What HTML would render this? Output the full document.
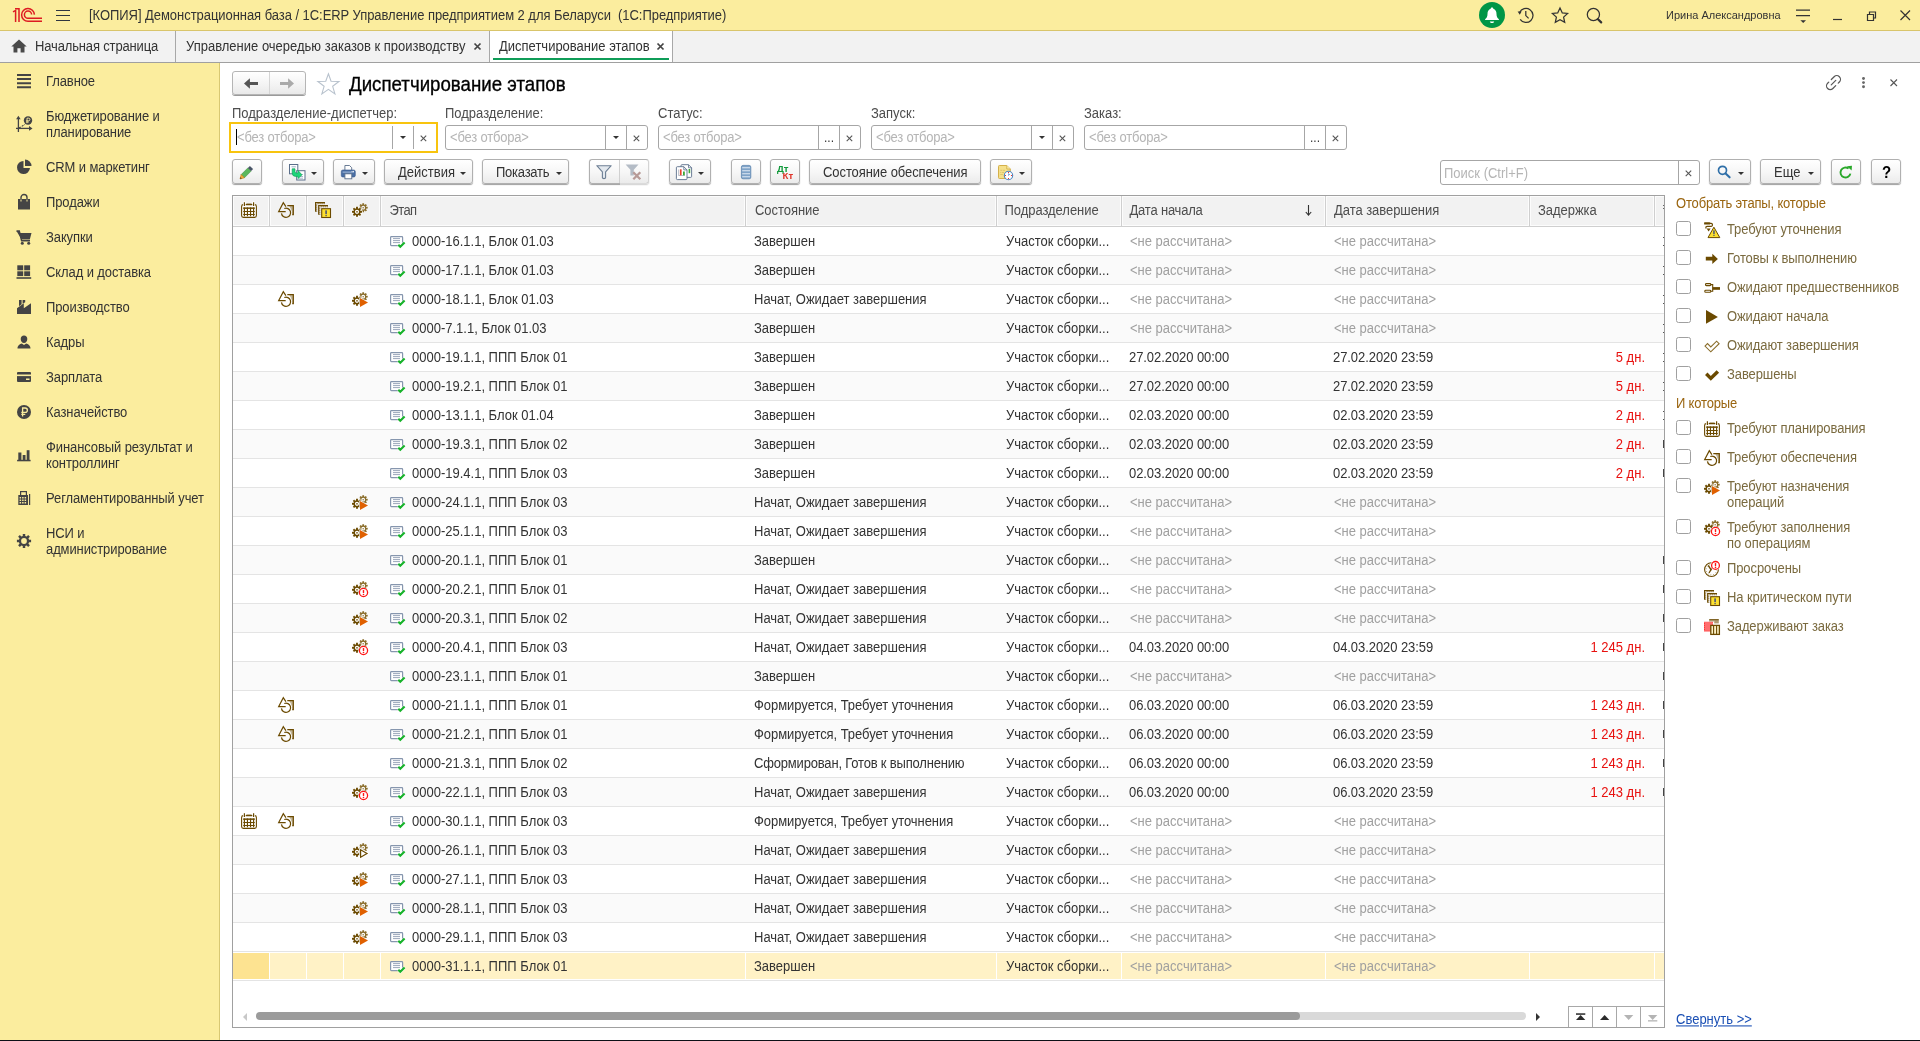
<!DOCTYPE html>
<html lang="ru"><head><meta charset="utf-8"><title>Диспетчирование этапов</title>
<style>
*{box-sizing:border-box;margin:0;padding:0}
html,body{width:1920px;height:1041px;overflow:hidden;background:#fff}
body{font-family:"Liberation Sans", Arial, sans-serif;font-size:13px;color:#333;position:relative;will-change:transform}
.abs{position:absolute}
.t{position:absolute;white-space:nowrap;line-height:16px;margin-top:1px}
.t,.sb,.lbl,.rp,.rph,.ph{transform:scaleY(1.075);transform-origin:0 8px}
#titlebar{position:absolute;left:0;top:0;width:1920px;height:31px;background:#fbed9e;border-bottom:1px solid #d9c56b}
#tabbar{position:absolute;left:0;top:31px;width:1920px;height:32px;background:#f2f2f2;border-bottom:1px solid #a0a0a0}
#sidebar{position:absolute;left:0;top:63px;width:220px;height:977px;background:#fbed9e;border-right:1px solid #d8c873}
#bottom{position:absolute;left:0;top:1040px;width:1920px;height:1px;background:#0d1016}
.tab{position:absolute;top:0;height:31px;border-right:1px solid #a8a8a8}
.sb{position:absolute;margin-top:1px;letter-spacing:-0.1px;left:46px;color:#333;font-size:13px;line-height:16px;white-space:nowrap}
.btn{position:absolute;height:25px;top:159px;border:1px solid #b0b0b0;border-radius:3px;background:linear-gradient(#ffffff,#f6f6f6 55%,#ebebeb);box-shadow:0 1px 1px rgba(0,0,0,.38)}
.btn .t{color:#333}
.inp{position:absolute;top:125px;height:25px;border:1px solid #a6a6a6;border-radius:3px;background:#fff}
.inp .ph{position:absolute;left:4px;top:4px;letter-spacing:-0.2px;color:#b5b5b5;font-size:13px;line-height:16px;white-space:nowrap}
.inp .sep{position:absolute;top:0;width:1px;height:23px;background:#a6a6a6}
.lbl{position:absolute;top:106px;color:#4d4d4d;font-size:13px;line-height:16px;white-space:nowrap}
.caret{position:absolute;width:0;height:0;border-left:3px solid transparent;border-right:3px solid transparent;border-top:3px solid #333}
#grid{position:absolute;left:232px;top:195px;width:1433px;height:833px;border:1px solid #a0a0a0;background:#fff;overflow:hidden}
.hd{position:absolute;top:0;height:31px;background:#f2f2f2;border-right:1px solid #cfcfcf;border-bottom:1px solid #cfcfcf;box-shadow:inset 1px 1px 0 #fcfcfc,inset -1px -1px 0 #fcfcfc}
.hd .t{top:6px;color:#4d4d4d}
.row{position:absolute;left:0;width:1431px;height:29px;border-bottom:1px solid #e4e4e4}
.row.alt{background:#fafafa}
.row.sel{background:#fff}
.row .t{top:6px;color:#333}
.row .g{color:#a0a0a0}
.row .r{color:#e8110f}
.cb{position:absolute;left:1676px;width:15px;height:15px;border:1px solid #a0a0a0;border-radius:2.5px;background:#fff}
.rp{position:absolute;margin-top:1px;letter-spacing:-0.1px;left:1727px;color:#7a6a3f;font-size:13px;line-height:16px;white-space:nowrap}
.rph{position:absolute;margin-top:1px;letter-spacing:-0.17px;left:1676px;color:#9a6510;font-size:13px;line-height:16px;white-space:nowrap}
svg{position:absolute;overflow:visible}
</style></head>
<body>
<div id="titlebar">
<svg style="left:12px;top:7px" width="31" height="17" viewBox="0 0 31 17"><g fill="none" stroke="#dd1b22" stroke-width="1.5"><path d="M1 4.8 L3.6 3.4 V15"/><path d="M3 1.8 H7 V15"/><path d="M22.4 7.6 A6.4 6.4 0 1 0 16 14.3 H30"/><path d="M19.6 7.6 A3.6 3.6 0 1 0 16 11.3 H30"/></g></svg>
<svg style="left:56px;top:9px" width="15" height="13" viewBox="0 0 15 13"><g stroke="#2f3640" stroke-width="1.2"><path d="M0 1.5H14M0 6.5H14M0 11.5H14"/></g></svg>
<div class="t" style="left:89px;top:7px;font-size:13px;letter-spacing:-0.05px;color:#333">[КОПИЯ] Демонстрационная база / 1С:ERP Управление предприятием 2 для Беларуси&nbsp; (1С:Предприятие)</div>
<svg style="left:1479px;top:2px" width="26" height="26" viewBox="0 0 26 26"><circle cx="13" cy="13" r="13" fill="#009646"/><path d="M13 5.6c-.8 0-1.3.5-1.3 1.2-2.2.7-3.2 2.6-3.2 5.1 0 2.6-.9 4.2-2.4 5.3v.9h13.8v-.9c-1.5-1.1-2.4-2.7-2.4-5.3 0-2.5-1-4.4-3.2-5.1 0-.7-.5-1.2-1.3-1.2z" fill="#fff"/><path d="M10.8 19.4h4.4c-.3 1-1.1 1.5-2.2 1.5s-1.900-.5-2.200-1.500z" fill="#fff"/></svg>
<svg style="left:1515px;top:5px" width="20" height="20" viewBox="0 0 20 20"><g fill="none" stroke="#333" stroke-width="1.25"><path d="M4.6 7.6 A7 7 0 1 1 5.2 14.4"/><path d="M10.8 6V10.6L13.6 13.4"/></g><path d="M2.6 6.4 L6.6 6.6 L4.8 9.8z" fill="#333"/></svg>
<svg style="left:1550px;top:5px" width="20" height="20" viewBox="0 0 20 20"><path d="M10 2.9l2.3 5 5.3.6-4 3.600 1.100 5.300L10 14.800l-4.700 2.600 1.100-5.300-4-3.600 5.300-.6z" fill="none" stroke="#333" stroke-width="1.25" stroke-linejoin="miter"/></svg>
<svg style="left:1585px;top:5px" width="20" height="20" viewBox="0 0 20 20"><circle cx="8.4" cy="9.5" r="6.1" fill="none" stroke="#333" stroke-width="1.25"/><path d="M13 14.200L16.200 17.400" stroke="#333" stroke-width="2.2" stroke-linecap="round"/></svg>
<div class="t" style="left:1666px;top:6px;font-size:11px;color:#333">Ирина Александровна</div>
<svg style="left:1795px;top:8px" width="16" height="16" viewBox="0 0 16 16"><path d="M1 2.2H15M1 7.6H15" stroke="#333" stroke-width="1.2"/><path d="M5.4 12.2h5.6l-2.800 2.900z" fill="#333"/></svg>
<svg style="left:1832px;top:8px" width="12" height="14" viewBox="0 0 12 14"><path d="M1 11.5H10" stroke="#333" stroke-width="1.2"/></svg>
<svg style="left:1866px;top:10px" width="12" height="12" viewBox="0 0 12 12"><g fill="none" stroke="#333" stroke-width="1.2"><path d="M1.5 4.5h6v6h-6z"/><path d="M3.5 4.5v-2.5h6v6h-2"/></g></svg>
<svg style="left:1900px;top:9.5px" width="11" height="11" viewBox="0 0 11 11"><path d="M0.5 0.5L10 10M10 0.5L0.5 10" stroke="#333" stroke-width="1.2"/></svg>
</div>
<div id="tabbar">
<div class="tab" style="left:0;width:176px"><svg style="left:11px;top:8px" width="16" height="14" viewBox="0 0 16 14"><path d="M8 0.5L0.3 7.5H2.5V13.5H6.4V9.3H9.6V13.5H13.5V7.5H15.7z" fill="#4a4a4a"/></svg><div class="t" style="left:35px;top:7px;letter-spacing:-0.15px">Начальная страница</div></div>
<div class="tab" style="left:176px;width:314px"><div class="t" style="left:10px;top:7px">Управление очередью заказов к производству</div><svg style="left:298px;top:12px" width="7" height="7" viewBox="0 0 7 7"><path d="M0.5 0.5L6.5 6.5M6.5 0.5L0.5 6.5" stroke="#444" stroke-width="1.7"/></svg></div>
<div class="tab" style="left:490px;width:183px;background:#fff"><div class="t" style="left:9px;top:7px">Диспетчирование этапов</div><svg style="left:167px;top:12px" width="7" height="7" viewBox="0 0 7 7"><path d="M0.5 0.5L6.5 6.5M6.5 0.5L0.5 6.5" stroke="#444" stroke-width="1.7"/></svg><div class="abs" style="left:3px;top:27px;width:176px;height:2px;background:#0f9d58"></div></div>
</div>
<div id="sidebar">
<div class="sb" style="top:10px">Главное</div>
<svg style="left:16px;top:10px" width="16" height="16" viewBox="0 0 16 16"><path d="M1 2H15M1 6.1H15M1 10.2H15M1 14.3H15" stroke="#444" stroke-width="2"/></svg>
<div class="sb" style="top:45px">Бюджетирование и</div>
<div class="sb" style="top:61px">планирование</div>
<svg style="left:16px;top:53px" width="16" height="16" viewBox="0 0 16 16"><g stroke="#444" stroke-width="1.3" fill="none"><path d="M2.4 2V16"/><path d="M0 12.4H14.5"/><path d="M3 12L9 8.4" stroke-dasharray="2 1.2" stroke-width="1.1"/></g><path d="M2.4 -0.3L4.700 3.300H0.100z" fill="#444"/><path d="M16.5 12.4L13 10.100V14.700z" fill="#444"/><circle cx="12" cy="4.5" r="4.2" fill="#444"/><path d="M11 7.200V2.200H12.600A1.200 1.200 0 0 1 12.600 4.800H10.200M10.200 6H12.800" stroke="#fbed9e" stroke-width="0.9" fill="none"/></svg>
<div class="sb" style="top:96px">CRM и маркетинг</div>
<svg style="left:16px;top:96px" width="16" height="16" viewBox="0 0 16 16"><path d="M7.5 2A6.5 6.5 0 1 0 14 9H7.5z" fill="#444"/><path d="M9 0.5A6.5 6.5 0 0 1 15.5 7H9z" fill="#444"/></svg>
<div class="sb" style="top:131px">Продажи</div>
<svg style="left:16px;top:131px" width="16" height="16" viewBox="0 0 16 16"><path d="M2 5H14V15.5H2z" fill="#444"/><path d="M5 7V3.5A3 3 0 0 1 11 3.5V7" fill="none" stroke="#444" stroke-width="1.4"/><path d="M5 5.5v2M11 5.5v2" stroke="#fbed9e" stroke-width="1"/></svg>
<div class="sb" style="top:166px">Закупки</div>
<svg style="left:16px;top:166px" width="16" height="16" viewBox="0 0 16 16"><path d="M0.5 2H3.5L4.2 4H15.5L13.8 10.5H5.5z" fill="#444"/><path d="M0.5 2H3.3L5.6 11.8H14" fill="none" stroke="#444" stroke-width="1.4"/><circle cx="6.3" cy="14.2" r="1.5" fill="#444"/><circle cx="12.7" cy="14.2" r="1.5" fill="#444"/></svg>
<div class="sb" style="top:201px">Склад и доставка</div>
<svg style="left:16px;top:201px" width="16" height="16" viewBox="0 0 16 16"><g fill="#444" transform="translate(0 -1)"><rect x="1.3" y="2.3" width="5.9" height="5"/><rect x="8.2" y="2.3" width="5.9" height="5"/><rect x="1.3" y="8.3" width="5.9" height="4.8"/><rect x="8.2" y="8.3" width="5.9" height="4.8"/><rect x="0.5" y="14.2" width="14.7" height="1.6"/></g></svg>
<div class="sb" style="top:236px">Производство</div>
<svg style="left:16px;top:236px" width="16" height="16" viewBox="0 0 16 16"><path d="M1 15V9.3L7.8 4.3V9.3L15 4.3V15z" fill="#444"/><path d="M3 1H5.6V5.2L3 7.2z" fill="#444"/><path d="M6.6 1H9.2V3.2L6.6 4.7z" fill="#444"/></svg>
<div class="sb" style="top:271px">Кадры</div>
<svg style="left:16px;top:271px" width="16" height="16" viewBox="0 0 16 16"><path d="M8 1.5C10 1.5 11.3 3 11.3 5S10 9 8 9 4.7 7 4.7 5 6 1.5 8 1.5z" fill="#444"/><path d="M1.5 14.5C1.5 11.5 4 10 5.8 9.6L8 11 10.2 9.6C12 10 14.5 11.5 14.5 14.5z" fill="#444"/></svg>
<div class="sb" style="top:306px">Зарплата</div>
<svg style="left:16px;top:306px" width="16" height="16" viewBox="0 0 16 16"><rect x="1" y="3" width="14" height="10" rx="1" fill="#444"/><rect x="1" y="5.5" width="14" height="1.6" fill="#fbed9e"/><rect x="10" y="9.5" width="3.5" height="1.5" fill="#fbed9e"/></svg>
<div class="sb" style="top:341px">Казначейство</div>
<svg style="left:16px;top:341px" width="16" height="16" viewBox="0 0 16 16"><circle cx="8" cy="8" r="7" fill="#444"/><path d="M6.6 12.5V4H9.2A2.1 2.1 0 0 1 9.2 8.3H5.3M5.3 10.3H9.3" stroke="#fbed9e" stroke-width="1.3" fill="none"/></svg>
<div class="sb" style="top:376px">Финансовый результат и</div>
<div class="sb" style="top:392px">контроллинг</div>
<svg style="left:16px;top:384px" width="16" height="16" viewBox="0 0 16 16"><g fill="#444"><rect x="1.1" y="12.8" width="13.5" height="1.5"/><rect x="2.3" y="5.5" width="3.1" height="8"/><rect x="6.7" y="8" width="2.8" height="5.500"/><rect x="10.7" y="3.2" width="2.8" height="10.300"/></g></svg>
<div class="sb" style="top:427px">Регламентированный учет</div>
<svg style="left:16px;top:427px" width="16" height="16" viewBox="0 0 16 16"><path d="M4 1H11V5H12V15H2.3V5H4z" fill="#444"/><rect x="5.2" y="2.2" width="4.6" height="2.8" fill="#fbed9e"/><g fill="#fbed9e"><rect x="3.6" y="7" width="1.5" height="1.5"/><rect x="6.1" y="7" width="1.5" height="1.5"/><rect x="8.6" y="7" width="1.5" height="1.5"/><rect x="3.6" y="9.5" width="1.5" height="1.5"/><rect x="6.1" y="9.5" width="1.5" height="1.5"/><rect x="8.6" y="9.5" width="1.5" height="1.5"/><rect x="3.6" y="12" width="1.5" height="1.5"/><rect x="6.1" y="12" width="1.5" height="1.5"/><rect x="8.6" y="12" width="1.5" height="1.5"/></g><path d="M13.6 4V15" stroke="#444" stroke-width="1.2"/></svg>
<div class="sb" style="top:462px">НСИ и</div>
<div class="sb" style="top:478px">администрирование</div>
<svg style="left:16px;top:470px" width="16" height="16" viewBox="0 0 16 16"><path d="M15.09 6.76L15.09 9.24L13.06 9.21L12.43 10.72L13.89 12.14L12.14 13.89L10.72 12.43L9.21 13.06L9.24 15.09L6.76 15.09L6.79 13.06L5.28 12.43L3.86 13.89L2.11 12.14L3.57 10.72L2.94 9.21L0.91 9.24L0.91 6.76L2.94 6.79L3.57 5.28L2.11 3.86L3.86 2.11L5.28 3.57L6.79 2.94L6.76 0.91L9.24 0.91L9.21 2.94L10.72 3.57L12.14 2.11L13.89 3.86L12.43 5.28L13.06 6.79z" fill="#444"/><circle cx="8" cy="8" r="2.9" fill="#fbed9e"/></svg>
</div>
<div class="abs" style="left:232px;top:71px;width:74px;height:24px;border:1px solid #b5b5b5;border-radius:3px;background:linear-gradient(#fff,#f3f3f3 60%,#e9e9e9);box-shadow:0 1px 0 #9a9a9a"><div class="abs" style="left:36px;top:0;width:1px;height:22px;background:#d5d5d5"></div><svg style="left:11px;top:6px" width="14" height="11" viewBox="0 0 14 11"><path d="M0 5.5L5.9 0.200V4.100H14V6.900H5.900V10.800z" fill="#555"/></svg><svg style="left:47px;top:6px" width="14" height="11" viewBox="0 0 14 11"><path d="M14 5.5L8.100 0.200V4.100H0V6.900H8.100V10.800z" fill="#aaa"/></svg></div>
<svg style="left:316.4px;top:72px" width="25" height="25" viewBox="0 0 25 25"><path d="M12.40 1.80L15.05 9.26L22.96 9.47L16.68 14.29L18.92 21.88L12.40 17.40L5.88 21.88L8.12 14.29L1.84 9.47L9.75 9.26z" fill="#fff" stroke="#b8c2cd" stroke-width="1.1" stroke-linejoin="miter"/></svg>
<div class="t" style="left:349px;top:71px;font-size:18.7px;line-height:24px;color:#000;-webkit-text-stroke:0.3px #000">Диспетчирование этапов</div>
<svg style="left:1824px;top:73px" width="19" height="19" viewBox="0 0 19 19"><g transform="translate(9.5 9.6) rotate(-45)" fill="none" stroke="#595959" stroke-width="1.25" stroke-linecap="round"><path d="M0.6 -3.7H4.6A3.7 3.7 0 0 1 4.6 3.7H3"/><path d="M-0.6 3.7H-4.6A3.7 3.7 0 0 1 -4.6 -3.7H-3"/><path d="M-3.2 0H3.2"/></g></svg>
<svg style="left:1860px;top:75px" width="7" height="16" viewBox="0 0 7 16"><g fill="#666"><circle cx="3.5" cy="3.5" r="1.45"/><circle cx="3.5" cy="7.6" r="1.45"/><circle cx="3.5" cy="11.7" r="1.45"/></g></svg>
<svg style="left:1890px;top:79px" width="8" height="8" viewBox="0 0 8 8"><path d="M0.5 0.5L7 7M7 0.5L0.5 7" stroke="#555" stroke-width="1.1"/></svg>
<div class="lbl" style="left:232px">Подразделение-диспетчер:</div>
<div class="lbl" style="left:445px">Подразделение:</div>
<div class="lbl" style="left:658px">Статус:</div>
<div class="lbl" style="left:871px">Запуск:</div>
<div class="lbl" style="left:1084px">Заказ:</div>
<div class="abs" style="left:229px;top:122px;width:209px;height:31px;border:2px solid #f8c40e;background:#fff"></div>
<div class="inp" style="left:232px;width:203px;border-color:transparent;background:transparent"><div class="ph">&lt;без отбора&gt;</div><div class="sep" style="left:159px"></div><div class="sep" style="left:180px"></div><div class="caret" style="left:167px;top:10px"></div><svg style="left:187.4px;top:8.6px" width="7" height="7" viewBox="0 0 7 7"><path d="M0.7 0.7L6.2 6.2M6.2 0.7L0.7 6.2" stroke="#555" stroke-width="1.1"/></svg></div>
<div class="abs" style="left:236px;top:129px;width:1px;height:16px;background:#000"></div>
<div class="inp" style="left:445px;width:203px"><div class="ph">&lt;без отбора&gt;</div><div class="sep" style="left:159px"></div><div class="sep" style="left:180px"></div><div class="caret" style="left:167px;top:10px"></div><svg style="left:187.4px;top:8.6px" width="7" height="7" viewBox="0 0 7 7"><path d="M0.7 0.7L6.2 6.2M6.2 0.7L0.7 6.2" stroke="#555" stroke-width="1.1"/></svg></div>
<div class="inp" style="left:658px;width:203px"><div class="ph">&lt;без отбора&gt;</div><div class="sep" style="left:159px"></div><div class="sep" style="left:180px"></div><div class="t" style="left:165px;top:3px;font-size:12px;color:#333">...</div><svg style="left:187.4px;top:8.6px" width="7" height="7" viewBox="0 0 7 7"><path d="M0.7 0.7L6.2 6.2M6.2 0.7L0.7 6.2" stroke="#555" stroke-width="1.1"/></svg></div>
<div class="inp" style="left:871px;width:203px"><div class="ph">&lt;без отбора&gt;</div><div class="sep" style="left:159px"></div><div class="sep" style="left:180px"></div><div class="caret" style="left:167px;top:10px"></div><svg style="left:187.4px;top:8.6px" width="7" height="7" viewBox="0 0 7 7"><path d="M0.7 0.7L6.2 6.2M6.2 0.7L0.7 6.2" stroke="#555" stroke-width="1.1"/></svg></div>
<div class="inp" style="left:1084px;width:263px"><div class="ph">&lt;без отбора&gt;</div><div class="sep" style="left:219px"></div><div class="sep" style="left:240px"></div><div class="t" style="left:225px;top:3px;font-size:12px;color:#333">...</div><svg style="left:247.4px;top:8.6px" width="7" height="7" viewBox="0 0 7 7"><path d="M0.7 0.7L6.2 6.2M6.2 0.7L0.7 6.2" stroke="#555" stroke-width="1.1"/></svg></div>
<div class="btn" style="left:232px;width:30px"><svg style="left:5px;top:4px" width="17" height="17" viewBox="0 0 17 17"><path d="M3.2 10.6L9.9 3.9 13.1 7.1 6.4 13.8z" fill="#5cb85c" stroke="#3f8f3f" stroke-width="0.6"/><path d="M9.9 3.9L11.9 1.9 15.1 5.1 13.1 7.1z" fill="#4a5568"/><path d="M2 15L3.2 10.6 6.4 13.8z" fill="#f5b041" stroke="#b9770e" stroke-width="0.6"/><path d="M2 15l.5-1.9 1.4 1.4z" fill="#6e4a1a"/></svg></div>
<div class="btn" style="left:282px;width:42px"><svg style="left:6px;top:4px" width="17" height="17" viewBox="0 0 17 17"><rect x="0.5" y="0.5" width="8.3" height="9.3" fill="#fff" stroke="#5a6e8a" stroke-width="1"/><path d="M2.5 2.8h4.4" stroke="#9fb0c6" stroke-width="1"/><rect x="7.7" y="6.7" width="8.3" height="9.3" fill="#fff" stroke="#5a6e8a" stroke-width="1"/><path d="M10 10.5h4M10 12.5h4M10 14.2h4" stroke="#9fb0c6" stroke-width="0.9"/><path d="M3.2 4.8H6V7.6Q6 9 7.4 9H9V6.6L13 10.8 9 14.6V12.4H6.6Q3.2 12.4 3.2 9z" fill="#1fd47a" stroke="#12a85c" stroke-width="0.7" stroke-linejoin="round"/></svg><div class="caret" style="left:28px;top:12px"></div></div>
<div class="btn" style="left:333px;width:42px"><svg style="left:7px;top:4px" width="15" height="16" viewBox="0 0 15 16"><path d="M3.9 1.5H8.5L10.7 3.7V7H3.9z" fill="#fff" stroke="#5a6e8a" stroke-width="0.9"/><rect x="0.3" y="6" width="14" height="7" rx="1.6" fill="#4a6fa5" stroke="#34568a" stroke-width="0.6"/><rect x="1.6" y="7.6" width="11.4" height="1" fill="#a9bfdc"/><rect x="3.9" y="9.8" width="6.9" height="5" fill="#fff" stroke="#5a6e8a" stroke-width="0.9"/><rect x="10.6" y="6.9" width="1" height="0.9" fill="#fff"/><rect x="12" y="6.9" width="1" height="0.9" fill="#fff"/></svg><div class="caret" style="left:28px;top:12px"></div></div>
<div class="btn" style="left:384px;width:89px"><div class="t" style="left:13px;top:4px">Действия</div><div class="caret" style="left:75px;top:12px"></div></div>
<div class="btn" style="left:482px;width:87px"><div class="t" style="left:13px;top:4px;letter-spacing:-0.25px">Показать</div><div class="caret" style="left:73px;top:12px"></div></div>
<div class="btn" style="left:589px;width:60px;border-color:#b0b0b0 #d4d4d4 #b0b0b0 #b0b0b0"><div class="abs" style="left:29px;top:0;width:1px;height:23px;background:#d0d0d0"></div><div class="abs" style="left:30px;top:23px;width:29px;height:2px;background:#fff;opacity:.55"></div><svg style="left:6px;top:5px" width="16" height="15" viewBox="0 0 16 15"><path d="M0.8 0.7H15.2L9.6 6.9V12.6Q9.6 13.6 8 13.6 6.4 13.6 6.4 12.6V6.9z" fill="#e3e8ee" stroke="#6d7f94" stroke-width="1.1" stroke-linejoin="round"/></svg><svg style="left:35px;top:4px" width="17" height="17" viewBox="0 0 17 17"><path d="M0.6 0.4H13.5L8.8 5.8V11.4H5.4V5.8z" fill="#b4bcc6"/><path d="M8.3 8.2L15.3 15.2M15.3 8.2L8.3 15.2" stroke="#b79a97" stroke-width="2.3"/></svg></div>
<div class="btn" style="left:669px;width:42px"><svg style="left:6px;top:4px" width="17" height="17" viewBox="0 0 17 17"><path d="M6 0.7H12.5L15.6 3.8V12.4Q15.6 13.4 14.6 13.4H6Q5 13.4 5 12.4V1.7Q5 0.7 6 0.7z" fill="#fff" stroke="#5a6e8a" stroke-width="0.9"/><path d="M12.5 0.7V3.8H15.6" fill="none" stroke="#5a6e8a" stroke-width="0.8"/><rect x="12.6" y="5" width="1.6" height="4.2" fill="#3aa935"/><path d="M1.4 2.7H7.8L11 5.9V14.6Q11 15.6 10 15.6H1.4Q0.4 15.6 0.4 14.6V3.7Q0.4 2.7 1.4 2.7z" fill="#fff" stroke="#5a6e8a" stroke-width="0.9"/><path d="M7.8 2.7V5.9H11" fill="none" stroke="#5a6e8a" stroke-width="0.8"/><path d="M2.6 5.5V11.5H9" fill="none" stroke="#8a97a8" stroke-width="0.6"/><rect x="3.9" y="5.3" width="1.7" height="6" fill="#e8412c"/><rect x="7" y="7.5" width="1.8" height="3.8" fill="#3aa935"/></svg><div class="caret" style="left:28px;top:12px"></div></div>
<div class="btn" style="left:731px;width:30px"><svg style="left:9px;top:5px" width="10" height="14" viewBox="0 0 10 14"><rect x="0.4" y="0.4" width="9.4" height="13.4" rx="1.6" fill="#7fa3c8" stroke="#5f86b0" stroke-width="0.8"/><path d="M1.2 2.8h7.8M1.2 5.8h7.8M1.2 8.8h7.8M1.2 11.8h7.8" stroke="#dfe9f4" stroke-width="1.1"/></svg></div>
<div class="btn" style="left:770px;width:30px"><svg style="left:6px;top:4px" width="21" height="17" viewBox="0 0 21 17"><text x="0" y="8" font-family="Liberation Sans,Arial,sans-serif" font-size="9.6" font-weight="bold" fill="#119a3b">Дт</text><text x="5.6" y="15.2" font-family="Liberation Sans,Arial,sans-serif" font-size="9.6" font-weight="bold" fill="#e0352b">Кт</text></svg></div>
<div class="btn" style="left:809px;width:172px"><div class="t" style="left:13px;top:4px;letter-spacing:-0.08px">Состояние обеспечения</div></div>
<div class="btn" style="left:990px;width:42px"><svg style="left:7px;top:5px" width="16" height="16" viewBox="0 0 16 16"><path d="M1.4 0.5H8.8L12.3 4V12.6Q12.3 13.5 11.4 13.5H1.4Q0.5 13.5 0.5 12.6V1.4Q0.5 0.5 1.4 0.5z" fill="#f5e08a" stroke="#d4b04a" stroke-width="1"/><path d="M8.8 0.5V4H12.3" fill="#faeeb0" stroke="#d4b04a" stroke-width="0.9"/><path d="M2.3 5.3h2M5 5.3h2M2.3 7.5h1M4 7.5h2M2.3 9.5h2.6" stroke="#dcc268" stroke-width="0.9"/><circle cx="10.5" cy="10.5" r="4.2" fill="#fff" stroke="#4a85c0" stroke-width="1.1"/><path d="M10.5 10.5V8.3M10.5 10.5L12 9" stroke="#7fa6d8" stroke-width="0.9"/><g fill="#e8110f"><circle cx="10.5" cy="7.5" r="0.6"/><circle cx="10.5" cy="13.5" r="0.6"/><circle cx="7.5" cy="10.5" r="0.6"/><circle cx="13.5" cy="10.5" r="0.6"/></g></svg><div class="caret" style="left:28px;top:12px"></div></div>
<div class="abs" style="left:1440px;top:160px;width:260px;height:25px;border:1px solid #a6a6a6;border-radius:3px;background:#fff"><div class="t" style="left:3px;top:4px;color:#b5b5b5">Поиск (Ctrl+F)</div><div class="abs" style="left:237px;top:0;width:1px;height:23px;background:#a6a6a6"></div><svg style="left:244px;top:9px" width="7" height="7" viewBox="0 0 7 7"><path d="M0.7 0.7L6.2 6.2M6.2 0.7L0.7 6.2" stroke="#555" stroke-width="1.1"/></svg></div>
<div class="btn" style="left:1709px;width:42px"><svg style="left:7px;top:5px" width="15" height="14" viewBox="0 0 15 14"><circle cx="5.5" cy="5.3" r="4" fill="none" stroke="#2f6fa8" stroke-width="1.7"/><path d="M8.6 8.4L12.6 12.3" stroke="#2f6fa8" stroke-width="2.1" stroke-linecap="round"/></svg><div class="caret" style="left:28px;top:12px"></div></div>
<div class="btn" style="left:1760px;width:61px"><div class="t" style="left:13px;top:4px">Еще</div><div class="caret" style="left:47px;top:12px"></div></div>
<div class="btn" style="left:1831px;width:30px"><svg style="left:7px;top:5px" width="14" height="14" viewBox="0 0 14 14"><path d="M11.4 8.6A5 5 0 1 1 9.6 3.6" fill="none" stroke="#2aa82a" stroke-width="1.9"/><path d="M7.9 1.3L13 0.8 12.6 5.6z" fill="#2aa82a"/></svg></div>
<div class="btn" style="left:1871px;width:30px"><div class="t" style="left:10px;top:4px;font-weight:bold;color:#000;font-size:15px">?</div></div>
<div id="grid">
<div class="hd" style="left:0px;width:37px"><svg style="left:8px;top:6px" width="16" height="16" viewBox="0 0 16 16"><rect x="0.6" y="2.6" width="14.8" height="12.8" rx="1.8" fill="#fff" stroke="#6b4a00" stroke-width="1.1"/><path d="M3.4 -0.4V4.4M12.6 -0.4V4.4" stroke="#fff" stroke-width="2.6"/><path d="M5.4 2.3H10.6" stroke="#6b4a00" stroke-width="1.4"/><path d="M3.4 0.2V3.9M12.6 0.2V3.9" stroke="#6b4a00" stroke-width="1.2"/><rect x="2.2" y="5.4" width="11.6" height="1.5" fill="#6b4a00"/><path d="M3.4 5.4V14.2M6.45 5.4V14.2M9.55 5.4V14.2M12.6 5.4V14.2M2.2 9.5H13.8M2.2 12.5H13.8" stroke="#6b4a00" stroke-width="1.15"/></svg></div>
<div class="hd" style="left:37px;width:37px"><svg style="left:8px;top:6px" width="16" height="16" viewBox="0 0 16 16"><path d="M11.3 4L15 4 15 12 14 12 14 9.5 12.6 6.3z" fill="#6b4a00" opacity=".4"/><g fill="none" stroke="#6b4a00" stroke-width="1.25"><path d="M7.9 4.7L5.3 0.7 0.7 9.5H7.7"/><path d="M6.3 6.5A4.6 4.6 0 1 1 3.45 11.4"/><path d="M9.3 3.5H15.3V12.5H14.2"/></g></svg></div>
<div class="hd" style="left:74px;width:37px"><svg style="left:8px;top:6px" width="16" height="16" viewBox="0 0 16 16"><g fill="none" stroke="#6b4a00"><path d="M0.6 9.8V0.6H10" stroke-width="1.2"/><path d="M1.7 2.6V9.8" stroke-width="1" stroke-dasharray="1 1"/><path d="M2.6 1.7H10" stroke-width="1" stroke-dasharray="1 1"/><path d="M3.7 12.8V3.7H13" stroke-width="1.2"/><path d="M4.8 5.7V12.8" stroke-width="1" stroke-dasharray="1 1"/><path d="M5.7 4.8H13" stroke-width="1" stroke-dasharray="1 1"/></g><rect x="6.7" y="6.7" width="8.8" height="8.8" fill="#fde030" stroke="#6b4a00" stroke-width="1.1"/><rect x="10.3" y="8.3" width="1.6" height="3.9" rx=".4" fill="#4a5578"/><rect x="10.3" y="13.1" width="1.6" height="1.1" rx=".5" fill="#4a5578"/></svg></div>
<div class="hd" style="left:111px;width:37px"><svg style="left:8px;top:7px" width="16" height="16" viewBox="0 0 16 16"><path d="M15.71 3.80L15.71 5.60L14.40 5.50L14.03 6.40L15.02 7.26L13.76 8.52L12.90 7.53L12.00 7.90L12.10 9.21L10.30 9.21L10.40 7.90L9.50 7.53L8.64 8.52L7.38 7.26L8.37 6.40L8.00 5.50L6.69 5.60L6.69 3.80L8.00 3.90L8.37 3.00L7.38 2.14L8.64 0.88L9.50 1.87L10.40 1.50L10.30 0.19L12.10 0.19L12.00 1.50L12.90 1.87L13.76 0.88L15.02 2.14L14.03 3.00L14.40 3.90zM9.30 4.70a1.90 1.90 0 1 0 3.80 0a1.90 1.90 0 1 0 -3.80 0z" fill="#8a6d2a" fill-rule="evenodd"/><rect x="10.50" y="4.00" width="1.40" height="1.40" fill="#8a6d2a" opacity=".8"/><circle cx="5" cy="8.8" r="5.6" fill="#fff" opacity=".9"/><path d="M10.00 7.81L10.00 9.79L8.59 9.69L8.17 10.71L9.24 11.63L7.83 13.04L6.91 11.97L5.89 12.39L5.99 13.80L4.01 13.80L4.11 12.39L3.09 11.97L2.17 13.04L0.76 11.63L1.83 10.71L1.41 9.69L-0.00 9.79L-0.00 7.81L1.41 7.91L1.83 6.89L0.76 5.97L2.17 4.56L3.09 5.63L4.11 5.21L4.01 3.80L5.99 3.80L5.89 5.21L6.91 5.63L7.83 4.56L9.24 5.97L8.17 6.89L8.59 7.91zM2.90 8.80a2.10 2.10 0 1 0 4.20 0a2.10 2.10 0 1 0 -4.20 0z" fill="#6b4a00" fill-rule="evenodd"/><rect x="4.20" y="8.00" width="1.60" height="1.60" fill="#6b4a00" opacity=".8"/></svg></div>
<div class="hd" style="left:148px;width:365px"><div class="t" style="left:8.5px;letter-spacing:-0.6px">Этап</div></div>
<div class="hd" style="left:513px;width:251px"><div class="t" style="left:9px;letter-spacing:-0.05px">Состояние</div></div>
<div class="hd" style="left:764px;width:125px"><div class="t" style="left:7.5px;letter-spacing:-0.05px">Подразделение</div></div>
<div class="hd" style="left:889px;width:204px"><div class="t" style="left:7.5px;letter-spacing:-0.2px">Дата начала</div><svg style="left:183px;top:9px" width="8" height="12" viewBox="0 0 8 12"><path d="M3.5 0V10M0.8 7L3.5 10.2 6.2 7" fill="none" stroke="#333" stroke-width="1.1"/></svg></div>
<div class="hd" style="left:1093px;width:204px"><div class="t" style="left:8px;letter-spacing:-0.05px">Дата завершения</div></div>
<div class="hd" style="left:1297px;width:125px"><div class="t" style="left:8px;letter-spacing:-0.05px">Задержка</div></div>
<div class="hd" style="left:1422px;width:11px"><div class="abs" style="left:8px;top:9px;width:1px;height:1px;background:#666"></div><div class="abs" style="left:8px;top:12px;width:1px;height:1px;background:#666"></div></div>
<div class="row" style="top:31px"><svg style="left:157px;top:9px" width="16" height="13" viewBox="0 0 16 13"><rect x="0.6" y="0.6" width="12" height="9" rx="0.8" fill="#fff" stroke="#8696ae" stroke-width="1.2"/><path d="M3 2.6h7M3 4.6h7M3 6.6h7" stroke="#8e9db3" stroke-width="0.9"/><path d="M8.3 8.7L10.3 10.8 14.6 6.6" fill="none" stroke="#fff" stroke-width="3.2" opacity=".7"/><path d="M8.3 8.7L10.3 10.8 14.6 6.6" fill="none" stroke="#17b32a" stroke-width="2.1"/></svg><div class="t" style="left:179px">0000-16.1.1, Блок 01.03</div><div class="t" style="left:521px;">Завершен</div><div class="t" style="left:773px">Участок сборки...</div><div class="t g" style="left:897px">&lt;не рассчитана&gt;</div><div class="t g" style="left:1101px">&lt;не рассчитана&gt;</div><div class="abs" style="left:1430px;top:10px;width:1px;height:1px;background:#555"></div><div class="abs" style="left:1430px;top:18px;width:1px;height:1px;background:#555"></div></div>
<div class="row alt" style="top:60px"><svg style="left:157px;top:9px" width="16" height="13" viewBox="0 0 16 13"><rect x="0.6" y="0.6" width="12" height="9" rx="0.8" fill="#fff" stroke="#8696ae" stroke-width="1.2"/><path d="M3 2.6h7M3 4.6h7M3 6.6h7" stroke="#8e9db3" stroke-width="0.9"/><path d="M8.3 8.7L10.3 10.8 14.6 6.6" fill="none" stroke="#fff" stroke-width="3.2" opacity=".7"/><path d="M8.3 8.7L10.3 10.8 14.6 6.6" fill="none" stroke="#17b32a" stroke-width="2.1"/></svg><div class="t" style="left:179px">0000-17.1.1, Блок 01.03</div><div class="t" style="left:521px;">Завершен</div><div class="t" style="left:773px">Участок сборки...</div><div class="t g" style="left:897px">&lt;не рассчитана&gt;</div><div class="t g" style="left:1101px">&lt;не рассчитана&gt;</div><div class="abs" style="left:1430px;top:10px;width:1px;height:1px;background:#555"></div><div class="abs" style="left:1430px;top:18px;width:1px;height:1px;background:#555"></div></div>
<div class="row" style="top:89px"><svg style="left:45px;top:6px" width="16" height="16" viewBox="0 0 16 16"><path d="M11.3 4L15 4 15 12 14 12 14 9.5 12.6 6.3z" fill="#6b4a00" opacity=".4"/><g fill="none" stroke="#6b4a00" stroke-width="1.25"><path d="M7.9 4.7L5.3 0.7 0.7 9.5H7.7"/><path d="M6.3 6.5A4.6 4.6 0 1 1 3.45 11.4"/><path d="M9.3 3.5H15.3V12.5H14.2"/></g></svg><svg style="left:119px;top:7px" width="17" height="16" viewBox="0 0 17 16"><path d="M15.71 3.80L15.71 5.60L14.40 5.50L14.03 6.40L15.02 7.26L13.76 8.52L12.90 7.53L12.00 7.90L12.10 9.21L10.30 9.21L10.40 7.90L9.50 7.53L8.64 8.52L7.38 7.26L8.37 6.40L8.00 5.50L6.69 5.60L6.69 3.80L8.00 3.90L8.37 3.00L7.38 2.14L8.64 0.88L9.50 1.87L10.40 1.50L10.30 0.19L12.10 0.19L12.00 1.50L12.90 1.87L13.76 0.88L15.02 2.14L14.03 3.00L14.40 3.90zM9.30 4.70a1.90 1.90 0 1 0 3.80 0a1.90 1.90 0 1 0 -3.80 0z" fill="#8a6d2a" fill-rule="evenodd"/><rect x="10.50" y="4.00" width="1.40" height="1.40" fill="#8a6d2a" opacity=".8"/><circle cx="5" cy="8.8" r="5.6" fill="#fff" opacity=".9"/><path d="M10.00 7.81L10.00 9.79L8.59 9.69L8.17 10.71L9.24 11.63L7.83 13.04L6.91 11.97L5.89 12.39L5.99 13.80L4.01 13.80L4.11 12.39L3.09 11.97L2.17 13.04L0.76 11.63L1.83 10.71L1.41 9.69L-0.00 9.79L-0.00 7.81L1.41 7.91L1.83 6.89L0.76 5.97L2.17 4.56L3.09 5.63L4.11 5.21L4.01 3.80L5.99 3.80L5.89 5.21L6.91 5.63L7.83 4.56L9.24 5.97L8.17 6.89L8.59 7.91zM2.90 8.80a2.10 2.10 0 1 0 4.20 0a2.10 2.10 0 1 0 -4.20 0z" fill="#6b4a00" fill-rule="evenodd"/><rect x="4.20" y="8.00" width="1.60" height="1.60" fill="#6b4a00" opacity=".8"/><path d="M8 6V15L16 10.5z" fill="#e06000" stroke="#fff" stroke-width="1.3" paint-order="stroke" stroke-linejoin="round"/></svg><svg style="left:157px;top:9px" width="16" height="13" viewBox="0 0 16 13"><rect x="0.6" y="0.6" width="12" height="9" rx="0.8" fill="#fff" stroke="#8696ae" stroke-width="1.2"/><path d="M3 2.6h7M3 4.6h7M3 6.6h7" stroke="#8e9db3" stroke-width="0.9"/><path d="M8.3 8.7L10.3 10.8 14.6 6.6" fill="none" stroke="#fff" stroke-width="3.2" opacity=".7"/><path d="M8.3 8.7L10.3 10.8 14.6 6.6" fill="none" stroke="#17b32a" stroke-width="2.1"/></svg><div class="t" style="left:179px">0000-18.1.1, Блок 01.03</div><div class="t" style="left:521px;">Начат, Ожидает завершения</div><div class="t" style="left:773px">Участок сборки...</div><div class="t g" style="left:897px">&lt;не рассчитана&gt;</div><div class="t g" style="left:1101px">&lt;не рассчитана&gt;</div><div class="abs" style="left:1430px;top:10px;width:1px;height:1px;background:#555"></div><div class="abs" style="left:1430px;top:18px;width:1px;height:1px;background:#555"></div></div>
<div class="row alt" style="top:118px"><svg style="left:157px;top:9px" width="16" height="13" viewBox="0 0 16 13"><rect x="0.6" y="0.6" width="12" height="9" rx="0.8" fill="#fff" stroke="#8696ae" stroke-width="1.2"/><path d="M3 2.6h7M3 4.6h7M3 6.6h7" stroke="#8e9db3" stroke-width="0.9"/><path d="M8.3 8.7L10.3 10.8 14.6 6.6" fill="none" stroke="#fff" stroke-width="3.2" opacity=".7"/><path d="M8.3 8.7L10.3 10.8 14.6 6.6" fill="none" stroke="#17b32a" stroke-width="2.1"/></svg><div class="t" style="left:179px">0000-7.1.1, Блок 01.03</div><div class="t" style="left:521px;">Завершен</div><div class="t" style="left:773px">Участок сборки...</div><div class="t g" style="left:897px">&lt;не рассчитана&gt;</div><div class="t g" style="left:1101px">&lt;не рассчитана&gt;</div><div class="abs" style="left:1430px;top:10px;width:1px;height:1px;background:#555"></div><div class="abs" style="left:1430px;top:18px;width:1px;height:1px;background:#555"></div></div>
<div class="row" style="top:147px"><svg style="left:157px;top:9px" width="16" height="13" viewBox="0 0 16 13"><rect x="0.6" y="0.6" width="12" height="9" rx="0.8" fill="#fff" stroke="#8696ae" stroke-width="1.2"/><path d="M3 2.6h7M3 4.6h7M3 6.6h7" stroke="#8e9db3" stroke-width="0.9"/><path d="M8.3 8.7L10.3 10.8 14.6 6.6" fill="none" stroke="#fff" stroke-width="3.2" opacity=".7"/><path d="M8.3 8.7L10.3 10.8 14.6 6.6" fill="none" stroke="#17b32a" stroke-width="2.1"/></svg><div class="t" style="left:179px">0000-19.1.1, ППП Блок 01</div><div class="t" style="left:521px;">Завершен</div><div class="t" style="left:773px">Участок сборки...</div><div class="t" style="left:896px;letter-spacing:-0.07px">27.02.2020 00:00</div><div class="t" style="left:1100px;letter-spacing:-0.07px">27.02.2020 23:59</div><div class="t r" style="right:19px">5 дн.</div><div class="abs" style="left:1430px;top:10px;width:1px;height:1px;background:#555"></div><div class="abs" style="left:1430px;top:18px;width:1px;height:1px;background:#555"></div></div>
<div class="row alt" style="top:176px"><svg style="left:157px;top:9px" width="16" height="13" viewBox="0 0 16 13"><rect x="0.6" y="0.6" width="12" height="9" rx="0.8" fill="#fff" stroke="#8696ae" stroke-width="1.2"/><path d="M3 2.6h7M3 4.6h7M3 6.6h7" stroke="#8e9db3" stroke-width="0.9"/><path d="M8.3 8.7L10.3 10.8 14.6 6.6" fill="none" stroke="#fff" stroke-width="3.2" opacity=".7"/><path d="M8.3 8.7L10.3 10.8 14.6 6.6" fill="none" stroke="#17b32a" stroke-width="2.1"/></svg><div class="t" style="left:179px">0000-19.2.1, ППП Блок 01</div><div class="t" style="left:521px;">Завершен</div><div class="t" style="left:773px">Участок сборки...</div><div class="t" style="left:896px;letter-spacing:-0.07px">27.02.2020 00:00</div><div class="t" style="left:1100px;letter-spacing:-0.07px">27.02.2020 23:59</div><div class="t r" style="right:19px">5 дн.</div><div class="abs" style="left:1430px;top:10px;width:1px;height:1px;background:#555"></div><div class="abs" style="left:1430px;top:18px;width:1px;height:1px;background:#555"></div></div>
<div class="row" style="top:205px"><svg style="left:157px;top:9px" width="16" height="13" viewBox="0 0 16 13"><rect x="0.6" y="0.6" width="12" height="9" rx="0.8" fill="#fff" stroke="#8696ae" stroke-width="1.2"/><path d="M3 2.6h7M3 4.6h7M3 6.6h7" stroke="#8e9db3" stroke-width="0.9"/><path d="M8.3 8.7L10.3 10.8 14.6 6.6" fill="none" stroke="#fff" stroke-width="3.2" opacity=".7"/><path d="M8.3 8.7L10.3 10.8 14.6 6.6" fill="none" stroke="#17b32a" stroke-width="2.1"/></svg><div class="t" style="left:179px">0000-13.1.1, Блок 01.04</div><div class="t" style="left:521px;">Завершен</div><div class="t" style="left:773px">Участок сборки...</div><div class="t" style="left:896px;letter-spacing:-0.07px">02.03.2020 00:00</div><div class="t" style="left:1100px;letter-spacing:-0.07px">02.03.2020 23:59</div><div class="t r" style="right:19px">2 дн.</div><div class="abs" style="left:1430px;top:10px;width:1px;height:1px;background:#555"></div><div class="abs" style="left:1430px;top:18px;width:1px;height:1px;background:#555"></div></div>
<div class="row alt" style="top:234px"><svg style="left:157px;top:9px" width="16" height="13" viewBox="0 0 16 13"><rect x="0.6" y="0.6" width="12" height="9" rx="0.8" fill="#fff" stroke="#8696ae" stroke-width="1.2"/><path d="M3 2.6h7M3 4.6h7M3 6.6h7" stroke="#8e9db3" stroke-width="0.9"/><path d="M8.3 8.7L10.3 10.8 14.6 6.6" fill="none" stroke="#fff" stroke-width="3.2" opacity=".7"/><path d="M8.3 8.7L10.3 10.8 14.6 6.6" fill="none" stroke="#17b32a" stroke-width="2.1"/></svg><div class="t" style="left:179px">0000-19.3.1, ППП Блок 02</div><div class="t" style="left:521px;">Завершен</div><div class="t" style="left:773px">Участок сборки...</div><div class="t" style="left:896px;letter-spacing:-0.07px">02.03.2020 00:00</div><div class="t" style="left:1100px;letter-spacing:-0.07px">02.03.2020 23:59</div><div class="t r" style="right:19px">2 дн.</div><div class="abs" style="left:1430px;top:10px;width:1px;height:8px;background:#444"></div></div>
<div class="row" style="top:263px"><svg style="left:157px;top:9px" width="16" height="13" viewBox="0 0 16 13"><rect x="0.6" y="0.6" width="12" height="9" rx="0.8" fill="#fff" stroke="#8696ae" stroke-width="1.2"/><path d="M3 2.6h7M3 4.6h7M3 6.6h7" stroke="#8e9db3" stroke-width="0.9"/><path d="M8.3 8.7L10.3 10.8 14.6 6.6" fill="none" stroke="#fff" stroke-width="3.2" opacity=".7"/><path d="M8.3 8.7L10.3 10.8 14.6 6.6" fill="none" stroke="#17b32a" stroke-width="2.1"/></svg><div class="t" style="left:179px">0000-19.4.1, ППП Блок 03</div><div class="t" style="left:521px;">Завершен</div><div class="t" style="left:773px">Участок сборки...</div><div class="t" style="left:896px;letter-spacing:-0.07px">02.03.2020 00:00</div><div class="t" style="left:1100px;letter-spacing:-0.07px">02.03.2020 23:59</div><div class="t r" style="right:19px">2 дн.</div><div class="abs" style="left:1430px;top:10px;width:1px;height:8px;background:#444"></div></div>
<div class="row alt" style="top:292px"><svg style="left:119px;top:7px" width="17" height="16" viewBox="0 0 17 16"><path d="M15.71 3.80L15.71 5.60L14.40 5.50L14.03 6.40L15.02 7.26L13.76 8.52L12.90 7.53L12.00 7.90L12.10 9.21L10.30 9.21L10.40 7.90L9.50 7.53L8.64 8.52L7.38 7.26L8.37 6.40L8.00 5.50L6.69 5.60L6.69 3.80L8.00 3.90L8.37 3.00L7.38 2.14L8.64 0.88L9.50 1.87L10.40 1.50L10.30 0.19L12.10 0.19L12.00 1.50L12.90 1.87L13.76 0.88L15.02 2.14L14.03 3.00L14.40 3.90zM9.30 4.70a1.90 1.90 0 1 0 3.80 0a1.90 1.90 0 1 0 -3.80 0z" fill="#8a6d2a" fill-rule="evenodd"/><rect x="10.50" y="4.00" width="1.40" height="1.40" fill="#8a6d2a" opacity=".8"/><circle cx="5" cy="8.8" r="5.6" fill="#fff" opacity=".9"/><path d="M10.00 7.81L10.00 9.79L8.59 9.69L8.17 10.71L9.24 11.63L7.83 13.04L6.91 11.97L5.89 12.39L5.99 13.80L4.01 13.80L4.11 12.39L3.09 11.97L2.17 13.04L0.76 11.63L1.83 10.71L1.41 9.69L-0.00 9.79L-0.00 7.81L1.41 7.91L1.83 6.89L0.76 5.97L2.17 4.56L3.09 5.63L4.11 5.21L4.01 3.80L5.99 3.80L5.89 5.21L6.91 5.63L7.83 4.56L9.24 5.97L8.17 6.89L8.59 7.91zM2.90 8.80a2.10 2.10 0 1 0 4.20 0a2.10 2.10 0 1 0 -4.20 0z" fill="#6b4a00" fill-rule="evenodd"/><rect x="4.20" y="8.00" width="1.60" height="1.60" fill="#6b4a00" opacity=".8"/><path d="M8 6V15L16 10.5z" fill="#e06000" stroke="#fff" stroke-width="1.3" paint-order="stroke" stroke-linejoin="round"/></svg><svg style="left:157px;top:9px" width="16" height="13" viewBox="0 0 16 13"><rect x="0.6" y="0.6" width="12" height="9" rx="0.8" fill="#fff" stroke="#8696ae" stroke-width="1.2"/><path d="M3 2.6h7M3 4.6h7M3 6.6h7" stroke="#8e9db3" stroke-width="0.9"/><path d="M8.3 8.7L10.3 10.8 14.6 6.6" fill="none" stroke="#fff" stroke-width="3.2" opacity=".7"/><path d="M8.3 8.7L10.3 10.8 14.6 6.6" fill="none" stroke="#17b32a" stroke-width="2.1"/></svg><div class="t" style="left:179px">0000-24.1.1, ППП Блок 03</div><div class="t" style="left:521px;">Начат, Ожидает завершения</div><div class="t" style="left:773px">Участок сборки...</div><div class="t g" style="left:897px">&lt;не рассчитана&gt;</div><div class="t g" style="left:1101px">&lt;не рассчитана&gt;</div></div>
<div class="row" style="top:321px"><svg style="left:119px;top:7px" width="17" height="16" viewBox="0 0 17 16"><path d="M15.71 3.80L15.71 5.60L14.40 5.50L14.03 6.40L15.02 7.26L13.76 8.52L12.90 7.53L12.00 7.90L12.10 9.21L10.30 9.21L10.40 7.90L9.50 7.53L8.64 8.52L7.38 7.26L8.37 6.40L8.00 5.50L6.69 5.60L6.69 3.80L8.00 3.90L8.37 3.00L7.38 2.14L8.64 0.88L9.50 1.87L10.40 1.50L10.30 0.19L12.10 0.19L12.00 1.50L12.90 1.87L13.76 0.88L15.02 2.14L14.03 3.00L14.40 3.90zM9.30 4.70a1.90 1.90 0 1 0 3.80 0a1.90 1.90 0 1 0 -3.80 0z" fill="#8a6d2a" fill-rule="evenodd"/><rect x="10.50" y="4.00" width="1.40" height="1.40" fill="#8a6d2a" opacity=".8"/><circle cx="5" cy="8.8" r="5.6" fill="#fff" opacity=".9"/><path d="M10.00 7.81L10.00 9.79L8.59 9.69L8.17 10.71L9.24 11.63L7.83 13.04L6.91 11.97L5.89 12.39L5.99 13.80L4.01 13.80L4.11 12.39L3.09 11.97L2.17 13.04L0.76 11.63L1.83 10.71L1.41 9.69L-0.00 9.79L-0.00 7.81L1.41 7.91L1.83 6.89L0.76 5.97L2.17 4.56L3.09 5.63L4.11 5.21L4.01 3.80L5.99 3.80L5.89 5.21L6.91 5.63L7.83 4.56L9.24 5.97L8.17 6.89L8.59 7.91zM2.90 8.80a2.10 2.10 0 1 0 4.20 0a2.10 2.10 0 1 0 -4.20 0z" fill="#6b4a00" fill-rule="evenodd"/><rect x="4.20" y="8.00" width="1.60" height="1.60" fill="#6b4a00" opacity=".8"/><path d="M8 6V15L16 10.5z" fill="#e06000" stroke="#fff" stroke-width="1.3" paint-order="stroke" stroke-linejoin="round"/></svg><svg style="left:157px;top:9px" width="16" height="13" viewBox="0 0 16 13"><rect x="0.6" y="0.6" width="12" height="9" rx="0.8" fill="#fff" stroke="#8696ae" stroke-width="1.2"/><path d="M3 2.6h7M3 4.6h7M3 6.6h7" stroke="#8e9db3" stroke-width="0.9"/><path d="M8.3 8.7L10.3 10.8 14.6 6.6" fill="none" stroke="#fff" stroke-width="3.2" opacity=".7"/><path d="M8.3 8.7L10.3 10.8 14.6 6.6" fill="none" stroke="#17b32a" stroke-width="2.1"/></svg><div class="t" style="left:179px">0000-25.1.1, ППП Блок 03</div><div class="t" style="left:521px;">Начат, Ожидает завершения</div><div class="t" style="left:773px">Участок сборки...</div><div class="t g" style="left:897px">&lt;не рассчитана&gt;</div><div class="t g" style="left:1101px">&lt;не рассчитана&gt;</div></div>
<div class="row alt" style="top:350px"><svg style="left:157px;top:9px" width="16" height="13" viewBox="0 0 16 13"><rect x="0.6" y="0.6" width="12" height="9" rx="0.8" fill="#fff" stroke="#8696ae" stroke-width="1.2"/><path d="M3 2.6h7M3 4.6h7M3 6.6h7" stroke="#8e9db3" stroke-width="0.9"/><path d="M8.3 8.7L10.3 10.8 14.6 6.6" fill="none" stroke="#fff" stroke-width="3.2" opacity=".7"/><path d="M8.3 8.7L10.3 10.8 14.6 6.6" fill="none" stroke="#17b32a" stroke-width="2.1"/></svg><div class="t" style="left:179px">0000-20.1.1, ППП Блок 01</div><div class="t" style="left:521px;">Завершен</div><div class="t" style="left:773px">Участок сборки...</div><div class="t g" style="left:897px">&lt;не рассчитана&gt;</div><div class="t g" style="left:1101px">&lt;не рассчитана&gt;</div><div class="abs" style="left:1430px;top:10px;width:1px;height:8px;background:#444"></div></div>
<div class="row" style="top:379px"><svg style="left:119px;top:6px" width="17" height="17" viewBox="0 0 17 17"><path d="M15.71 3.80L15.71 5.60L14.40 5.50L14.03 6.40L15.02 7.26L13.76 8.52L12.90 7.53L12.00 7.90L12.10 9.21L10.30 9.21L10.40 7.90L9.50 7.53L8.64 8.52L7.38 7.26L8.37 6.40L8.00 5.50L6.69 5.60L6.69 3.80L8.00 3.90L8.37 3.00L7.38 2.14L8.64 0.88L9.50 1.87L10.40 1.50L10.30 0.19L12.10 0.19L12.00 1.50L12.90 1.87L13.76 0.88L15.02 2.14L14.03 3.00L14.40 3.90zM9.30 4.70a1.90 1.90 0 1 0 3.80 0a1.90 1.90 0 1 0 -3.80 0z" fill="#8a6d2a" fill-rule="evenodd"/><rect x="10.50" y="4.00" width="1.40" height="1.40" fill="#8a6d2a" opacity=".8"/><circle cx="5" cy="8.8" r="5.6" fill="#fff" opacity=".9"/><path d="M10.00 7.81L10.00 9.79L8.59 9.69L8.17 10.71L9.24 11.63L7.83 13.04L6.91 11.97L5.89 12.39L5.99 13.80L4.01 13.80L4.11 12.39L3.09 11.97L2.17 13.04L0.76 11.63L1.83 10.71L1.41 9.69L-0.00 9.79L-0.00 7.81L1.41 7.91L1.83 6.89L0.76 5.97L2.17 4.56L3.09 5.63L4.11 5.21L4.01 3.80L5.99 3.80L5.89 5.21L6.91 5.63L7.83 4.56L9.24 5.97L8.17 6.89L8.59 7.91zM2.90 8.80a2.10 2.10 0 1 0 4.20 0a2.10 2.10 0 1 0 -4.20 0z" fill="#6b4a00" fill-rule="evenodd"/><rect x="4.20" y="8.00" width="1.60" height="1.60" fill="#6b4a00" opacity=".8"/><circle cx="11.5" cy="11.5" r="5.2" fill="#fff"/><circle cx="11.5" cy="11.5" r="4.1" fill="#fff" stroke="#ff1414" stroke-width="1.3"/><rect x="10.8" y="8.9" width="1.4" height="3.1" rx=".5" fill="#ff1414"/><circle cx="11.5" cy="13.5" r="0.8" fill="#ff1414"/></svg><svg style="left:157px;top:9px" width="16" height="13" viewBox="0 0 16 13"><rect x="0.6" y="0.6" width="12" height="9" rx="0.8" fill="#fff" stroke="#8696ae" stroke-width="1.2"/><path d="M3 2.6h7M3 4.6h7M3 6.6h7" stroke="#8e9db3" stroke-width="0.9"/><path d="M8.3 8.7L10.3 10.8 14.6 6.6" fill="none" stroke="#fff" stroke-width="3.2" opacity=".7"/><path d="M8.3 8.7L10.3 10.8 14.6 6.6" fill="none" stroke="#17b32a" stroke-width="2.1"/></svg><div class="t" style="left:179px">0000-20.2.1, ППП Блок 01</div><div class="t" style="left:521px;">Начат, Ожидает завершения</div><div class="t" style="left:773px">Участок сборки...</div><div class="t g" style="left:897px">&lt;не рассчитана&gt;</div><div class="t g" style="left:1101px">&lt;не рассчитана&gt;</div><div class="abs" style="left:1430px;top:10px;width:1px;height:8px;background:#444"></div></div>
<div class="row alt" style="top:408px"><svg style="left:119px;top:7px" width="17" height="16" viewBox="0 0 17 16"><path d="M15.71 3.80L15.71 5.60L14.40 5.50L14.03 6.40L15.02 7.26L13.76 8.52L12.90 7.53L12.00 7.90L12.10 9.21L10.30 9.21L10.40 7.90L9.50 7.53L8.64 8.52L7.38 7.26L8.37 6.40L8.00 5.50L6.69 5.60L6.69 3.80L8.00 3.90L8.37 3.00L7.38 2.14L8.64 0.88L9.50 1.87L10.40 1.50L10.30 0.19L12.10 0.19L12.00 1.50L12.90 1.87L13.76 0.88L15.02 2.14L14.03 3.00L14.40 3.90zM9.30 4.70a1.90 1.90 0 1 0 3.80 0a1.90 1.90 0 1 0 -3.80 0z" fill="#8a6d2a" fill-rule="evenodd"/><rect x="10.50" y="4.00" width="1.40" height="1.40" fill="#8a6d2a" opacity=".8"/><circle cx="5" cy="8.8" r="5.6" fill="#fff" opacity=".9"/><path d="M10.00 7.81L10.00 9.79L8.59 9.69L8.17 10.71L9.24 11.63L7.83 13.04L6.91 11.97L5.89 12.39L5.99 13.80L4.01 13.80L4.11 12.39L3.09 11.97L2.17 13.04L0.76 11.63L1.83 10.71L1.41 9.69L-0.00 9.79L-0.00 7.81L1.41 7.91L1.83 6.89L0.76 5.97L2.17 4.56L3.09 5.63L4.11 5.21L4.01 3.80L5.99 3.80L5.89 5.21L6.91 5.63L7.83 4.56L9.24 5.97L8.17 6.89L8.59 7.91zM2.90 8.80a2.10 2.10 0 1 0 4.20 0a2.10 2.10 0 1 0 -4.20 0z" fill="#6b4a00" fill-rule="evenodd"/><rect x="4.20" y="8.00" width="1.60" height="1.60" fill="#6b4a00" opacity=".8"/><path d="M8 6V15L16 10.5z" fill="#e06000" stroke="#fff" stroke-width="1.3" paint-order="stroke" stroke-linejoin="round"/></svg><svg style="left:157px;top:9px" width="16" height="13" viewBox="0 0 16 13"><rect x="0.6" y="0.6" width="12" height="9" rx="0.8" fill="#fff" stroke="#8696ae" stroke-width="1.2"/><path d="M3 2.6h7M3 4.6h7M3 6.6h7" stroke="#8e9db3" stroke-width="0.9"/><path d="M8.3 8.7L10.3 10.8 14.6 6.6" fill="none" stroke="#fff" stroke-width="3.2" opacity=".7"/><path d="M8.3 8.7L10.3 10.8 14.6 6.6" fill="none" stroke="#17b32a" stroke-width="2.1"/></svg><div class="t" style="left:179px">0000-20.3.1, ППП Блок 02</div><div class="t" style="left:521px;">Начат, Ожидает завершения</div><div class="t" style="left:773px">Участок сборки...</div><div class="t g" style="left:897px">&lt;не рассчитана&gt;</div><div class="t g" style="left:1101px">&lt;не рассчитана&gt;</div><div class="abs" style="left:1430px;top:10px;width:1px;height:8px;background:#444"></div></div>
<div class="row" style="top:437px"><svg style="left:119px;top:6px" width="17" height="17" viewBox="0 0 17 17"><path d="M15.71 3.80L15.71 5.60L14.40 5.50L14.03 6.40L15.02 7.26L13.76 8.52L12.90 7.53L12.00 7.90L12.10 9.21L10.30 9.21L10.40 7.90L9.50 7.53L8.64 8.52L7.38 7.26L8.37 6.40L8.00 5.50L6.69 5.60L6.69 3.80L8.00 3.90L8.37 3.00L7.38 2.14L8.64 0.88L9.50 1.87L10.40 1.50L10.30 0.19L12.10 0.19L12.00 1.50L12.90 1.87L13.76 0.88L15.02 2.14L14.03 3.00L14.40 3.90zM9.30 4.70a1.90 1.90 0 1 0 3.80 0a1.90 1.90 0 1 0 -3.80 0z" fill="#8a6d2a" fill-rule="evenodd"/><rect x="10.50" y="4.00" width="1.40" height="1.40" fill="#8a6d2a" opacity=".8"/><circle cx="5" cy="8.8" r="5.6" fill="#fff" opacity=".9"/><path d="M10.00 7.81L10.00 9.79L8.59 9.69L8.17 10.71L9.24 11.63L7.83 13.04L6.91 11.97L5.89 12.39L5.99 13.80L4.01 13.80L4.11 12.39L3.09 11.97L2.17 13.04L0.76 11.63L1.83 10.71L1.41 9.69L-0.00 9.79L-0.00 7.81L1.41 7.91L1.83 6.89L0.76 5.97L2.17 4.56L3.09 5.63L4.11 5.21L4.01 3.80L5.99 3.80L5.89 5.21L6.91 5.63L7.83 4.56L9.24 5.97L8.17 6.89L8.59 7.91zM2.90 8.80a2.10 2.10 0 1 0 4.20 0a2.10 2.10 0 1 0 -4.20 0z" fill="#6b4a00" fill-rule="evenodd"/><rect x="4.20" y="8.00" width="1.60" height="1.60" fill="#6b4a00" opacity=".8"/><circle cx="11.5" cy="11.5" r="5.2" fill="#fff"/><circle cx="11.5" cy="11.5" r="4.1" fill="#fff" stroke="#ff1414" stroke-width="1.3"/><rect x="10.8" y="8.9" width="1.4" height="3.1" rx=".5" fill="#ff1414"/><circle cx="11.5" cy="13.5" r="0.8" fill="#ff1414"/></svg><svg style="left:157px;top:9px" width="16" height="13" viewBox="0 0 16 13"><rect x="0.6" y="0.6" width="12" height="9" rx="0.8" fill="#fff" stroke="#8696ae" stroke-width="1.2"/><path d="M3 2.6h7M3 4.6h7M3 6.6h7" stroke="#8e9db3" stroke-width="0.9"/><path d="M8.3 8.7L10.3 10.8 14.6 6.6" fill="none" stroke="#fff" stroke-width="3.2" opacity=".7"/><path d="M8.3 8.7L10.3 10.8 14.6 6.6" fill="none" stroke="#17b32a" stroke-width="2.1"/></svg><div class="t" style="left:179px">0000-20.4.1, ППП Блок 03</div><div class="t" style="left:521px;">Начат, Ожидает завершения</div><div class="t" style="left:773px">Участок сборки...</div><div class="t" style="left:896px;letter-spacing:-0.07px">04.03.2020 00:00</div><div class="t" style="left:1100px;letter-spacing:-0.07px">04.03.2020 23:59</div><div class="t r" style="right:19px">1 245 дн.</div><div class="abs" style="left:1430px;top:10px;width:1px;height:8px;background:#444"></div></div>
<div class="row alt" style="top:466px"><svg style="left:157px;top:9px" width="16" height="13" viewBox="0 0 16 13"><rect x="0.6" y="0.6" width="12" height="9" rx="0.8" fill="#fff" stroke="#8696ae" stroke-width="1.2"/><path d="M3 2.6h7M3 4.6h7M3 6.6h7" stroke="#8e9db3" stroke-width="0.9"/><path d="M8.3 8.7L10.3 10.8 14.6 6.6" fill="none" stroke="#fff" stroke-width="3.2" opacity=".7"/><path d="M8.3 8.7L10.3 10.8 14.6 6.6" fill="none" stroke="#17b32a" stroke-width="2.1"/></svg><div class="t" style="left:179px">0000-23.1.1, ППП Блок 01</div><div class="t" style="left:521px;">Завершен</div><div class="t" style="left:773px">Участок сборки...</div><div class="t g" style="left:897px">&lt;не рассчитана&gt;</div><div class="t g" style="left:1101px">&lt;не рассчитана&gt;</div><div class="abs" style="left:1430px;top:10px;width:1px;height:8px;background:#444"></div></div>
<div class="row" style="top:495px"><svg style="left:45px;top:6px" width="16" height="16" viewBox="0 0 16 16"><path d="M11.3 4L15 4 15 12 14 12 14 9.5 12.6 6.3z" fill="#6b4a00" opacity=".4"/><g fill="none" stroke="#6b4a00" stroke-width="1.25"><path d="M7.9 4.7L5.3 0.7 0.7 9.5H7.7"/><path d="M6.3 6.5A4.6 4.6 0 1 1 3.45 11.4"/><path d="M9.3 3.5H15.3V12.5H14.2"/></g></svg><svg style="left:157px;top:9px" width="16" height="13" viewBox="0 0 16 13"><rect x="0.6" y="0.6" width="12" height="9" rx="0.8" fill="#fff" stroke="#8696ae" stroke-width="1.2"/><path d="M3 2.6h7M3 4.6h7M3 6.6h7" stroke="#8e9db3" stroke-width="0.9"/><path d="M8.3 8.7L10.3 10.8 14.6 6.6" fill="none" stroke="#fff" stroke-width="3.2" opacity=".7"/><path d="M8.3 8.7L10.3 10.8 14.6 6.6" fill="none" stroke="#17b32a" stroke-width="2.1"/></svg><div class="t" style="left:179px">0000-21.1.1, ППП Блок 01</div><div class="t" style="left:521px;letter-spacing:-0.05px;">Формируется, Требует уточнения</div><div class="t" style="left:773px">Участок сборки...</div><div class="t" style="left:896px;letter-spacing:-0.07px">06.03.2020 00:00</div><div class="t" style="left:1100px;letter-spacing:-0.07px">06.03.2020 23:59</div><div class="t r" style="right:19px">1 243 дн.</div><div class="abs" style="left:1430px;top:10px;width:1px;height:8px;background:#444"></div></div>
<div class="row alt" style="top:524px"><svg style="left:45px;top:6px" width="16" height="16" viewBox="0 0 16 16"><path d="M11.3 4L15 4 15 12 14 12 14 9.5 12.6 6.3z" fill="#6b4a00" opacity=".4"/><g fill="none" stroke="#6b4a00" stroke-width="1.25"><path d="M7.9 4.7L5.3 0.7 0.7 9.5H7.7"/><path d="M6.3 6.5A4.6 4.6 0 1 1 3.45 11.4"/><path d="M9.3 3.5H15.3V12.5H14.2"/></g></svg><svg style="left:157px;top:9px" width="16" height="13" viewBox="0 0 16 13"><rect x="0.6" y="0.6" width="12" height="9" rx="0.8" fill="#fff" stroke="#8696ae" stroke-width="1.2"/><path d="M3 2.6h7M3 4.6h7M3 6.6h7" stroke="#8e9db3" stroke-width="0.9"/><path d="M8.3 8.7L10.3 10.8 14.6 6.6" fill="none" stroke="#fff" stroke-width="3.2" opacity=".7"/><path d="M8.3 8.7L10.3 10.8 14.6 6.6" fill="none" stroke="#17b32a" stroke-width="2.1"/></svg><div class="t" style="left:179px">0000-21.2.1, ППП Блок 01</div><div class="t" style="left:521px;letter-spacing:-0.05px;">Формируется, Требует уточнения</div><div class="t" style="left:773px">Участок сборки...</div><div class="t" style="left:896px;letter-spacing:-0.07px">06.03.2020 00:00</div><div class="t" style="left:1100px;letter-spacing:-0.07px">06.03.2020 23:59</div><div class="t r" style="right:19px">1 243 дн.</div><div class="abs" style="left:1430px;top:10px;width:1px;height:8px;background:#444"></div></div>
<div class="row" style="top:553px"><svg style="left:157px;top:9px" width="16" height="13" viewBox="0 0 16 13"><rect x="0.6" y="0.6" width="12" height="9" rx="0.8" fill="#fff" stroke="#8696ae" stroke-width="1.2"/><path d="M3 2.6h7M3 4.6h7M3 6.6h7" stroke="#8e9db3" stroke-width="0.9"/><path d="M8.3 8.7L10.3 10.8 14.6 6.6" fill="none" stroke="#fff" stroke-width="3.2" opacity=".7"/><path d="M8.3 8.7L10.3 10.8 14.6 6.6" fill="none" stroke="#17b32a" stroke-width="2.1"/></svg><div class="t" style="left:179px">0000-21.3.1, ППП Блок 02</div><div class="t" style="left:521px;letter-spacing:-0.18px;">Сформирован, Готов к выполнению</div><div class="t" style="left:773px">Участок сборки...</div><div class="t" style="left:896px;letter-spacing:-0.07px">06.03.2020 00:00</div><div class="t" style="left:1100px;letter-spacing:-0.07px">06.03.2020 23:59</div><div class="t r" style="right:19px">1 243 дн.</div><div class="abs" style="left:1430px;top:10px;width:1px;height:8px;background:#444"></div></div>
<div class="row alt" style="top:582px"><svg style="left:119px;top:6px" width="17" height="17" viewBox="0 0 17 17"><path d="M15.71 3.80L15.71 5.60L14.40 5.50L14.03 6.40L15.02 7.26L13.76 8.52L12.90 7.53L12.00 7.90L12.10 9.21L10.30 9.21L10.40 7.90L9.50 7.53L8.64 8.52L7.38 7.26L8.37 6.40L8.00 5.50L6.69 5.60L6.69 3.80L8.00 3.90L8.37 3.00L7.38 2.14L8.64 0.88L9.50 1.87L10.40 1.50L10.30 0.19L12.10 0.19L12.00 1.50L12.90 1.87L13.76 0.88L15.02 2.14L14.03 3.00L14.40 3.90zM9.30 4.70a1.90 1.90 0 1 0 3.80 0a1.90 1.90 0 1 0 -3.80 0z" fill="#8a6d2a" fill-rule="evenodd"/><rect x="10.50" y="4.00" width="1.40" height="1.40" fill="#8a6d2a" opacity=".8"/><circle cx="5" cy="8.8" r="5.6" fill="#fff" opacity=".9"/><path d="M10.00 7.81L10.00 9.79L8.59 9.69L8.17 10.71L9.24 11.63L7.83 13.04L6.91 11.97L5.89 12.39L5.99 13.80L4.01 13.80L4.11 12.39L3.09 11.97L2.17 13.04L0.76 11.63L1.83 10.71L1.41 9.69L-0.00 9.79L-0.00 7.81L1.41 7.91L1.83 6.89L0.76 5.97L2.17 4.56L3.09 5.63L4.11 5.21L4.01 3.80L5.99 3.80L5.89 5.21L6.91 5.63L7.83 4.56L9.24 5.97L8.17 6.89L8.59 7.91zM2.90 8.80a2.10 2.10 0 1 0 4.20 0a2.10 2.10 0 1 0 -4.20 0z" fill="#6b4a00" fill-rule="evenodd"/><rect x="4.20" y="8.00" width="1.60" height="1.60" fill="#6b4a00" opacity=".8"/><circle cx="11.5" cy="11.5" r="5.2" fill="#fff"/><circle cx="11.5" cy="11.5" r="4.1" fill="#fff" stroke="#ff1414" stroke-width="1.3"/><rect x="10.8" y="8.9" width="1.4" height="3.1" rx=".5" fill="#ff1414"/><circle cx="11.5" cy="13.5" r="0.8" fill="#ff1414"/></svg><svg style="left:157px;top:9px" width="16" height="13" viewBox="0 0 16 13"><rect x="0.6" y="0.6" width="12" height="9" rx="0.8" fill="#fff" stroke="#8696ae" stroke-width="1.2"/><path d="M3 2.6h7M3 4.6h7M3 6.6h7" stroke="#8e9db3" stroke-width="0.9"/><path d="M8.3 8.7L10.3 10.8 14.6 6.6" fill="none" stroke="#fff" stroke-width="3.2" opacity=".7"/><path d="M8.3 8.7L10.3 10.8 14.6 6.6" fill="none" stroke="#17b32a" stroke-width="2.1"/></svg><div class="t" style="left:179px">0000-22.1.1, ППП Блок 03</div><div class="t" style="left:521px;">Начат, Ожидает завершения</div><div class="t" style="left:773px">Участок сборки...</div><div class="t" style="left:896px;letter-spacing:-0.07px">06.03.2020 00:00</div><div class="t" style="left:1100px;letter-spacing:-0.07px">06.03.2020 23:59</div><div class="t r" style="right:19px">1 243 дн.</div><div class="abs" style="left:1430px;top:10px;width:1px;height:8px;background:#444"></div></div>
<div class="row" style="top:611px"><svg style="left:8px;top:6px" width="16" height="16" viewBox="0 0 16 16"><rect x="0.6" y="2.6" width="14.8" height="12.8" rx="1.8" fill="#fff" stroke="#6b4a00" stroke-width="1.1"/><path d="M3.4 -0.4V4.4M12.6 -0.4V4.4" stroke="#fff" stroke-width="2.6"/><path d="M5.4 2.3H10.6" stroke="#6b4a00" stroke-width="1.4"/><path d="M3.4 0.2V3.9M12.6 0.2V3.9" stroke="#6b4a00" stroke-width="1.2"/><rect x="2.2" y="5.4" width="11.6" height="1.5" fill="#6b4a00"/><path d="M3.4 5.4V14.2M6.45 5.4V14.2M9.55 5.4V14.2M12.6 5.4V14.2M2.2 9.5H13.8M2.2 12.5H13.8" stroke="#6b4a00" stroke-width="1.15"/></svg><svg style="left:45px;top:6px" width="16" height="16" viewBox="0 0 16 16"><path d="M11.3 4L15 4 15 12 14 12 14 9.5 12.6 6.3z" fill="#6b4a00" opacity=".4"/><g fill="none" stroke="#6b4a00" stroke-width="1.25"><path d="M7.9 4.7L5.3 0.7 0.7 9.5H7.7"/><path d="M6.3 6.5A4.6 4.6 0 1 1 3.45 11.4"/><path d="M9.3 3.5H15.3V12.5H14.2"/></g></svg><svg style="left:157px;top:9px" width="16" height="13" viewBox="0 0 16 13"><rect x="0.6" y="0.6" width="12" height="9" rx="0.8" fill="#fff" stroke="#8696ae" stroke-width="1.2"/><path d="M3 2.6h7M3 4.6h7M3 6.6h7" stroke="#8e9db3" stroke-width="0.9"/><path d="M8.3 8.7L10.3 10.8 14.6 6.6" fill="none" stroke="#fff" stroke-width="3.2" opacity=".7"/><path d="M8.3 8.7L10.3 10.8 14.6 6.6" fill="none" stroke="#17b32a" stroke-width="2.1"/></svg><div class="t" style="left:179px">0000-30.1.1, ППП Блок 03</div><div class="t" style="left:521px;letter-spacing:-0.05px;">Формируется, Требует уточнения</div><div class="t" style="left:773px">Участок сборки...</div><div class="t g" style="left:897px">&lt;не рассчитана&gt;</div><div class="t g" style="left:1101px">&lt;не рассчитана&gt;</div></div>
<div class="row alt" style="top:640px"><svg style="left:119px;top:7px" width="17" height="16" viewBox="0 0 17 16"><path d="M15.71 3.80L15.71 5.60L14.40 5.50L14.03 6.40L15.02 7.26L13.76 8.52L12.90 7.53L12.00 7.90L12.10 9.21L10.30 9.21L10.40 7.90L9.50 7.53L8.64 8.52L7.38 7.26L8.37 6.40L8.00 5.50L6.69 5.60L6.69 3.80L8.00 3.90L8.37 3.00L7.38 2.14L8.64 0.88L9.50 1.87L10.40 1.50L10.30 0.19L12.10 0.19L12.00 1.50L12.90 1.87L13.76 0.88L15.02 2.14L14.03 3.00L14.40 3.90zM9.30 4.70a1.90 1.90 0 1 0 3.80 0a1.90 1.90 0 1 0 -3.80 0z" fill="#8a6d2a" fill-rule="evenodd"/><rect x="10.50" y="4.00" width="1.40" height="1.40" fill="#8a6d2a" opacity=".8"/><circle cx="5" cy="8.8" r="5.6" fill="#fff" opacity=".9"/><path d="M10.00 7.81L10.00 9.79L8.59 9.69L8.17 10.71L9.24 11.63L7.83 13.04L6.91 11.97L5.89 12.39L5.99 13.80L4.01 13.80L4.11 12.39L3.09 11.97L2.17 13.04L0.76 11.63L1.83 10.71L1.41 9.69L-0.00 9.79L-0.00 7.81L1.41 7.91L1.83 6.89L0.76 5.97L2.17 4.56L3.09 5.63L4.11 5.21L4.01 3.80L5.99 3.80L5.89 5.21L6.91 5.63L7.83 4.56L9.24 5.97L8.17 6.89L8.59 7.91zM2.90 8.80a2.10 2.10 0 1 0 4.20 0a2.10 2.10 0 1 0 -4.20 0z" fill="#6b4a00" fill-rule="evenodd"/><rect x="4.20" y="8.00" width="1.60" height="1.60" fill="#6b4a00" opacity=".8"/><path d="M8 5.6V15.4L16.6 10.5z" fill="#fff" stroke="#fff" stroke-width="1.6" stroke-linejoin="round"/><path d="M8.6 6.8V14.2L15 10.5z" fill="#fff" stroke="#6b4a00" stroke-width="1.2" stroke-linejoin="miter"/></svg><svg style="left:157px;top:9px" width="16" height="13" viewBox="0 0 16 13"><rect x="0.6" y="0.6" width="12" height="9" rx="0.8" fill="#fff" stroke="#8696ae" stroke-width="1.2"/><path d="M3 2.6h7M3 4.6h7M3 6.6h7" stroke="#8e9db3" stroke-width="0.9"/><path d="M8.3 8.7L10.3 10.8 14.6 6.6" fill="none" stroke="#fff" stroke-width="3.2" opacity=".7"/><path d="M8.3 8.7L10.3 10.8 14.6 6.6" fill="none" stroke="#17b32a" stroke-width="2.1"/></svg><div class="t" style="left:179px">0000-26.1.1, ППП Блок 03</div><div class="t" style="left:521px;">Начат, Ожидает завершения</div><div class="t" style="left:773px">Участок сборки...</div><div class="t g" style="left:897px">&lt;не рассчитана&gt;</div><div class="t g" style="left:1101px">&lt;не рассчитана&gt;</div></div>
<div class="row" style="top:669px"><svg style="left:119px;top:7px" width="17" height="16" viewBox="0 0 17 16"><path d="M15.71 3.80L15.71 5.60L14.40 5.50L14.03 6.40L15.02 7.26L13.76 8.52L12.90 7.53L12.00 7.90L12.10 9.21L10.30 9.21L10.40 7.90L9.50 7.53L8.64 8.52L7.38 7.26L8.37 6.40L8.00 5.50L6.69 5.60L6.69 3.80L8.00 3.90L8.37 3.00L7.38 2.14L8.64 0.88L9.50 1.87L10.40 1.50L10.30 0.19L12.10 0.19L12.00 1.50L12.90 1.87L13.76 0.88L15.02 2.14L14.03 3.00L14.40 3.90zM9.30 4.70a1.90 1.90 0 1 0 3.80 0a1.90 1.90 0 1 0 -3.80 0z" fill="#8a6d2a" fill-rule="evenodd"/><rect x="10.50" y="4.00" width="1.40" height="1.40" fill="#8a6d2a" opacity=".8"/><circle cx="5" cy="8.8" r="5.6" fill="#fff" opacity=".9"/><path d="M10.00 7.81L10.00 9.79L8.59 9.69L8.17 10.71L9.24 11.63L7.83 13.04L6.91 11.97L5.89 12.39L5.99 13.80L4.01 13.80L4.11 12.39L3.09 11.97L2.17 13.04L0.76 11.63L1.83 10.71L1.41 9.69L-0.00 9.79L-0.00 7.81L1.41 7.91L1.83 6.89L0.76 5.97L2.17 4.56L3.09 5.63L4.11 5.21L4.01 3.80L5.99 3.80L5.89 5.21L6.91 5.63L7.83 4.56L9.24 5.97L8.17 6.89L8.59 7.91zM2.90 8.80a2.10 2.10 0 1 0 4.20 0a2.10 2.10 0 1 0 -4.20 0z" fill="#6b4a00" fill-rule="evenodd"/><rect x="4.20" y="8.00" width="1.60" height="1.60" fill="#6b4a00" opacity=".8"/><path d="M8 6V15L16 10.5z" fill="#e06000" stroke="#fff" stroke-width="1.3" paint-order="stroke" stroke-linejoin="round"/></svg><svg style="left:157px;top:9px" width="16" height="13" viewBox="0 0 16 13"><rect x="0.6" y="0.6" width="12" height="9" rx="0.8" fill="#fff" stroke="#8696ae" stroke-width="1.2"/><path d="M3 2.6h7M3 4.6h7M3 6.6h7" stroke="#8e9db3" stroke-width="0.9"/><path d="M8.3 8.7L10.3 10.8 14.6 6.6" fill="none" stroke="#fff" stroke-width="3.2" opacity=".7"/><path d="M8.3 8.7L10.3 10.8 14.6 6.6" fill="none" stroke="#17b32a" stroke-width="2.1"/></svg><div class="t" style="left:179px">0000-27.1.1, ППП Блок 03</div><div class="t" style="left:521px;">Начат, Ожидает завершения</div><div class="t" style="left:773px">Участок сборки...</div><div class="t g" style="left:897px">&lt;не рассчитана&gt;</div><div class="t g" style="left:1101px">&lt;не рассчитана&gt;</div></div>
<div class="row alt" style="top:698px"><svg style="left:119px;top:7px" width="17" height="16" viewBox="0 0 17 16"><path d="M15.71 3.80L15.71 5.60L14.40 5.50L14.03 6.40L15.02 7.26L13.76 8.52L12.90 7.53L12.00 7.90L12.10 9.21L10.30 9.21L10.40 7.90L9.50 7.53L8.64 8.52L7.38 7.26L8.37 6.40L8.00 5.50L6.69 5.60L6.69 3.80L8.00 3.90L8.37 3.00L7.38 2.14L8.64 0.88L9.50 1.87L10.40 1.50L10.30 0.19L12.10 0.19L12.00 1.50L12.90 1.87L13.76 0.88L15.02 2.14L14.03 3.00L14.40 3.90zM9.30 4.70a1.90 1.90 0 1 0 3.80 0a1.90 1.90 0 1 0 -3.80 0z" fill="#8a6d2a" fill-rule="evenodd"/><rect x="10.50" y="4.00" width="1.40" height="1.40" fill="#8a6d2a" opacity=".8"/><circle cx="5" cy="8.8" r="5.6" fill="#fff" opacity=".9"/><path d="M10.00 7.81L10.00 9.79L8.59 9.69L8.17 10.71L9.24 11.63L7.83 13.04L6.91 11.97L5.89 12.39L5.99 13.80L4.01 13.80L4.11 12.39L3.09 11.97L2.17 13.04L0.76 11.63L1.83 10.71L1.41 9.69L-0.00 9.79L-0.00 7.81L1.41 7.91L1.83 6.89L0.76 5.97L2.17 4.56L3.09 5.63L4.11 5.21L4.01 3.80L5.99 3.80L5.89 5.21L6.91 5.63L7.83 4.56L9.24 5.97L8.17 6.89L8.59 7.91zM2.90 8.80a2.10 2.10 0 1 0 4.20 0a2.10 2.10 0 1 0 -4.20 0z" fill="#6b4a00" fill-rule="evenodd"/><rect x="4.20" y="8.00" width="1.60" height="1.60" fill="#6b4a00" opacity=".8"/><path d="M8 6V15L16 10.5z" fill="#e06000" stroke="#fff" stroke-width="1.3" paint-order="stroke" stroke-linejoin="round"/></svg><svg style="left:157px;top:9px" width="16" height="13" viewBox="0 0 16 13"><rect x="0.6" y="0.6" width="12" height="9" rx="0.8" fill="#fff" stroke="#8696ae" stroke-width="1.2"/><path d="M3 2.6h7M3 4.6h7M3 6.6h7" stroke="#8e9db3" stroke-width="0.9"/><path d="M8.3 8.7L10.3 10.8 14.6 6.6" fill="none" stroke="#fff" stroke-width="3.2" opacity=".7"/><path d="M8.3 8.7L10.3 10.8 14.6 6.6" fill="none" stroke="#17b32a" stroke-width="2.1"/></svg><div class="t" style="left:179px">0000-28.1.1, ППП Блок 03</div><div class="t" style="left:521px;">Начат, Ожидает завершения</div><div class="t" style="left:773px">Участок сборки...</div><div class="t g" style="left:897px">&lt;не рассчитана&gt;</div><div class="t g" style="left:1101px">&lt;не рассчитана&gt;</div></div>
<div class="row" style="top:727px"><svg style="left:119px;top:7px" width="17" height="16" viewBox="0 0 17 16"><path d="M15.71 3.80L15.71 5.60L14.40 5.50L14.03 6.40L15.02 7.26L13.76 8.52L12.90 7.53L12.00 7.90L12.10 9.21L10.30 9.21L10.40 7.90L9.50 7.53L8.64 8.52L7.38 7.26L8.37 6.40L8.00 5.50L6.69 5.60L6.69 3.80L8.00 3.90L8.37 3.00L7.38 2.14L8.64 0.88L9.50 1.87L10.40 1.50L10.30 0.19L12.10 0.19L12.00 1.50L12.90 1.87L13.76 0.88L15.02 2.14L14.03 3.00L14.40 3.90zM9.30 4.70a1.90 1.90 0 1 0 3.80 0a1.90 1.90 0 1 0 -3.80 0z" fill="#8a6d2a" fill-rule="evenodd"/><rect x="10.50" y="4.00" width="1.40" height="1.40" fill="#8a6d2a" opacity=".8"/><circle cx="5" cy="8.8" r="5.6" fill="#fff" opacity=".9"/><path d="M10.00 7.81L10.00 9.79L8.59 9.69L8.17 10.71L9.24 11.63L7.83 13.04L6.91 11.97L5.89 12.39L5.99 13.80L4.01 13.80L4.11 12.39L3.09 11.97L2.17 13.04L0.76 11.63L1.83 10.71L1.41 9.69L-0.00 9.79L-0.00 7.81L1.41 7.91L1.83 6.89L0.76 5.97L2.17 4.56L3.09 5.63L4.11 5.21L4.01 3.80L5.99 3.80L5.89 5.21L6.91 5.63L7.83 4.56L9.24 5.97L8.17 6.89L8.59 7.91zM2.90 8.80a2.10 2.10 0 1 0 4.20 0a2.10 2.10 0 1 0 -4.20 0z" fill="#6b4a00" fill-rule="evenodd"/><rect x="4.20" y="8.00" width="1.60" height="1.60" fill="#6b4a00" opacity=".8"/><path d="M8 6V15L16 10.5z" fill="#e06000" stroke="#fff" stroke-width="1.3" paint-order="stroke" stroke-linejoin="round"/></svg><svg style="left:157px;top:9px" width="16" height="13" viewBox="0 0 16 13"><rect x="0.6" y="0.6" width="12" height="9" rx="0.8" fill="#fff" stroke="#8696ae" stroke-width="1.2"/><path d="M3 2.6h7M3 4.6h7M3 6.6h7" stroke="#8e9db3" stroke-width="0.9"/><path d="M8.3 8.7L10.3 10.8 14.6 6.6" fill="none" stroke="#fff" stroke-width="3.2" opacity=".7"/><path d="M8.3 8.7L10.3 10.8 14.6 6.6" fill="none" stroke="#17b32a" stroke-width="2.1"/></svg><div class="t" style="left:179px">0000-29.1.1, ППП Блок 03</div><div class="t" style="left:521px;">Начат, Ожидает завершения</div><div class="t" style="left:773px">Участок сборки...</div><div class="t g" style="left:897px">&lt;не рассчитана&gt;</div><div class="t g" style="left:1101px">&lt;не рассчитана&gt;</div></div>
<div class="row sel" style="top:756px"><div class="abs" style="left:0px;top:1px;width:36px;height:26px;background:#fde391"></div><div class="abs" style="left:37px;top:1px;width:36px;height:26px;background:#fff2c6"></div><div class="abs" style="left:74px;top:1px;width:36px;height:26px;background:#fff2c6"></div><div class="abs" style="left:111px;top:1px;width:36px;height:26px;background:#fff2c6"></div><div class="abs" style="left:148px;top:1px;width:364px;height:26px;background:#fff2c6"></div><div class="abs" style="left:513px;top:1px;width:250px;height:26px;background:#fff2c6"></div><div class="abs" style="left:764px;top:1px;width:124px;height:26px;background:#fff2c6"></div><div class="abs" style="left:889px;top:1px;width:203px;height:26px;background:#fff2c6"></div><div class="abs" style="left:1093px;top:1px;width:203px;height:26px;background:#fff2c6"></div><div class="abs" style="left:1297px;top:1px;width:124px;height:26px;background:#fff2c6"></div><div class="abs" style="left:1422px;top:1px;width:10px;height:26px;background:#fff2c6"></div><svg style="left:157px;top:9px" width="16" height="13" viewBox="0 0 16 13"><rect x="0.6" y="0.6" width="12" height="9" rx="0.8" fill="#fff" stroke="#8696ae" stroke-width="1.2"/><path d="M3 2.6h7M3 4.6h7M3 6.6h7" stroke="#8e9db3" stroke-width="0.9"/><path d="M8.3 8.7L10.3 10.8 14.6 6.6" fill="none" stroke="#fff" stroke-width="3.2" opacity=".7"/><path d="M8.3 8.7L10.3 10.8 14.6 6.6" fill="none" stroke="#17b32a" stroke-width="2.1"/></svg><div class="t" style="left:179px">0000-31.1.1, ППП Блок 01</div><div class="t" style="left:521px;">Завершен</div><div class="t" style="left:773px">Участок сборки...</div><div class="t g" style="left:897px">&lt;не рассчитана&gt;</div><div class="t g" style="left:1101px">&lt;не рассчитана&gt;</div></div>
<div class="abs" style="left:1060px;top:816px;width:233px;height:8px;border-radius:0 4px 4px 0;background:#d9d9d9"></div>
<div class="abs" style="left:23px;top:816px;width:1044px;height:8px;border-radius:4px;background:#9b9b9b"></div>
<div class="abs" style="left:10px;top:817px;width:0;height:0;border-top:4px solid transparent;border-bottom:4px solid transparent;border-right:4px solid #c8c8c8"></div>
<div class="abs" style="left:1303px;top:817px;width:0;height:0;border-top:4px solid transparent;border-bottom:4px solid transparent;border-left:4px solid #333"></div>
<div class="abs" style="left:1335px;top:810px;width:25px;height:22px;border:1px solid #a8a8a8;background:linear-gradient(#fff 40%%,#ececec)"><svg style="left:0px;top:2px" width="23" height="15" viewBox="0 0 23 15"><rect x="7" y="4.3" width="9.3" height="1.5" fill="#2a2a2a"/><path d="M11.65 6L16.3 11H7z" fill="#2a2a2a"/></svg></div>
<div class="abs" style="left:1359px;top:810px;width:25px;height:22px;border:1px solid #a8a8a8;background:linear-gradient(#fff 40%%,#ececec)"><svg style="left:0px;top:2px" width="23" height="15" viewBox="0 0 23 15"><path d="M11.65 6L16.3 11H7z" fill="#2a2a2a"/></svg></div>
<div class="abs" style="left:1383px;top:810px;width:25px;height:22px;border:1px solid #a8a8a8;background:#fff"><svg style="left:0px;top:2px" width="23" height="15" viewBox="0 0 23 15"><path d="M11.65 11L16.3 6H7z" fill="#b4b4b4"/></svg></div>
<div class="abs" style="left:1407px;top:810px;width:25px;height:22px;border:1px solid #a8a8a8;background:#fff"><svg style="left:0px;top:2px" width="23" height="15" viewBox="0 0 23 15"><rect x="7" y="11.2" width="9.3" height="1.3" fill="#b4b4b4"/><path d="M11.65 11L16.3 6H7z" fill="#b4b4b4"/></svg></div>
</div>
<div class="rph" style="top:195px">Отобрать этапы, которые</div>
<div class="cb" style="top:221px"></div>
<svg style="left:1703px;top:221px" width="18" height="18" viewBox="0 0 18 18"><rect x="1.1" y="1.2" width="6" height="2.4" rx=".5" fill="#6b4a00"/><path d="M7 2.4H8.2Q9.4 2.4 9.4 3.6V4.2Q9.4 5.4 8.2 5.4H4Q2.9 5.4 2.9 6.5V7.6" fill="none" stroke="#6b4a00" stroke-width="1.2"/><path d="M3.6 7.4H7.6L5.6 10.6z" fill="#6b4a00"/><path d="M10.9 5.6L17.3 16.9H4.6z" fill="#fde030" stroke="#fff" stroke-width="2" stroke-linejoin="round" opacity=".9"/><path d="M10.9 6.2L16.8 16.6H5z" fill="#fde030" stroke="#6b4a00" stroke-width="1" stroke-linejoin="round"/><rect x="10.2" y="9.3" width="1.5" height="4" rx=".4" fill="#4a5578"/><rect x="10.2" y="14" width="1.5" height="1.1" rx=".4" fill="#4a5578"/></svg>
<div class="rp" style="top:221px">Требуют уточнения</div>
<div class="cb" style="top:250px"></div>
<svg style="left:1703px;top:250px" width="16" height="16" viewBox="0 0 16 16"><path d="M2.8 6.8H9.3V3.7L14.9 8.9 9.3 14.1V10.6H2.8z" fill="#6b4a00"/></svg>
<div class="rp" style="top:250px">Готовы к выполнению</div>
<div class="cb" style="top:279px"></div>
<svg style="left:1703px;top:279px" width="17" height="17" viewBox="0 0 17 17"><g fill="#fff" stroke="#6b4a00" stroke-width="1.1"><rect x="2.5" y="4.6" width="5.3" height="2" rx=".9"/><rect x="1.8" y="11.3" width="6" height="2" rx=".9"/></g><path d="M7.8 5.6H9.7V12.3H7.8" fill="none" stroke="#6b4a00" stroke-width="1.1"/><rect x="9.7" y="8.1" width="7.3" height="2.7" fill="#6b4a00"/></svg>
<div class="rp" style="top:279px">Ожидают предшественников</div>
<div class="cb" style="top:308px"></div>
<svg style="left:1703px;top:308px" width="16" height="17" viewBox="0 0 16 17"><path d="M3 2L14.9 8.9 3 15.8z" fill="#6b4a00"/></svg>
<div class="rp" style="top:308px">Ожидают начала</div>
<div class="cb" style="top:337px"></div>
<svg style="left:1703px;top:337px" width="17" height="16" viewBox="0 0 17 16"><path d="M2 9.1L4.5 6.6 7.8 9.9 13.6 4.2 16.1 6.7 7.8 14.8z" fill="#fff" stroke="#8a6d2a" stroke-width="1.1" stroke-linejoin="miter"/></svg>
<div class="rp" style="top:337px">Ожидают завершения</div>
<div class="cb" style="top:366px"></div>
<svg style="left:1703px;top:366px" width="17" height="16" viewBox="0 0 17 16"><path d="M2 9.1L4.5 6.6 7.8 9.9 13.6 4.2 16.1 6.7 7.8 14.8z" fill="#6b4a00"/></svg>
<div class="rp" style="top:366px">Завершены</div>
<div class="rph" style="top:395px">И которые</div>
<div class="cb" style="top:420px"></div>
<svg style="left:1704px;top:421px" width="16" height="16" viewBox="0 0 16 16"><rect x="0.6" y="2.6" width="14.8" height="12.8" rx="1.8" fill="#fff" stroke="#6b4a00" stroke-width="1.1"/><path d="M3.4 -0.4V4.4M12.6 -0.4V4.4" stroke="#fff" stroke-width="2.6"/><path d="M5.4 2.3H10.6" stroke="#6b4a00" stroke-width="1.4"/><path d="M3.4 0.2V3.9M12.6 0.2V3.9" stroke="#6b4a00" stroke-width="1.2"/><rect x="2.2" y="5.4" width="11.6" height="1.5" fill="#6b4a00"/><path d="M3.4 5.4V14.2M6.45 5.4V14.2M9.55 5.4V14.2M12.6 5.4V14.2M2.2 9.5H13.8M2.2 12.5H13.8" stroke="#6b4a00" stroke-width="1.15"/></svg>
<div class="rp" style="top:420px">Требуют планирования</div>
<div class="cb" style="top:449px"></div>
<svg style="left:1704px;top:450px" width="16" height="16" viewBox="0 0 16 16"><path d="M11.3 4L15 4 15 12 14 12 14 9.5 12.6 6.3z" fill="#6b4a00" opacity=".4"/><g fill="none" stroke="#6b4a00" stroke-width="1.25"><path d="M7.9 4.7L5.3 0.7 0.7 9.5H7.7"/><path d="M6.3 6.5A4.6 4.6 0 1 1 3.45 11.4"/><path d="M9.3 3.5H15.3V12.5H14.2"/></g></svg>
<div class="rp" style="top:449px">Требуют обеспечения</div>
<div class="cb" style="top:478px"></div>
<svg style="left:1704px;top:480px" width="17" height="16" viewBox="0 0 17 16"><path d="M15.71 3.80L15.71 5.60L14.40 5.50L14.03 6.40L15.02 7.26L13.76 8.52L12.90 7.53L12.00 7.90L12.10 9.21L10.30 9.21L10.40 7.90L9.50 7.53L8.64 8.52L7.38 7.26L8.37 6.40L8.00 5.50L6.69 5.60L6.69 3.80L8.00 3.90L8.37 3.00L7.38 2.14L8.64 0.88L9.50 1.87L10.40 1.50L10.30 0.19L12.10 0.19L12.00 1.50L12.90 1.87L13.76 0.88L15.02 2.14L14.03 3.00L14.40 3.90zM9.30 4.70a1.90 1.90 0 1 0 3.80 0a1.90 1.90 0 1 0 -3.80 0z" fill="#8a6d2a" fill-rule="evenodd"/><rect x="10.50" y="4.00" width="1.40" height="1.40" fill="#8a6d2a" opacity=".8"/><circle cx="5" cy="8.8" r="5.6" fill="#fff" opacity=".9"/><path d="M10.00 7.81L10.00 9.79L8.59 9.69L8.17 10.71L9.24 11.63L7.83 13.04L6.91 11.97L5.89 12.39L5.99 13.80L4.01 13.80L4.11 12.39L3.09 11.97L2.17 13.04L0.76 11.63L1.83 10.71L1.41 9.69L-0.00 9.79L-0.00 7.81L1.41 7.91L1.83 6.89L0.76 5.97L2.17 4.56L3.09 5.63L4.11 5.21L4.01 3.80L5.99 3.80L5.89 5.21L6.91 5.63L7.83 4.56L9.24 5.97L8.17 6.89L8.59 7.91zM2.90 8.80a2.10 2.10 0 1 0 4.20 0a2.10 2.10 0 1 0 -4.20 0z" fill="#6b4a00" fill-rule="evenodd"/><rect x="4.20" y="8.00" width="1.60" height="1.60" fill="#6b4a00" opacity=".8"/><path d="M8 6V15L16 10.5z" fill="#e06000" stroke="#fff" stroke-width="1.3" paint-order="stroke" stroke-linejoin="round"/></svg>
<div class="rp" style="top:478px">Требуют назначения</div>
<div class="rp" style="top:494px">операций</div>
<div class="cb" style="top:519px"></div>
<svg style="left:1704px;top:520px" width="17" height="17" viewBox="0 0 17 17"><path d="M15.71 3.80L15.71 5.60L14.40 5.50L14.03 6.40L15.02 7.26L13.76 8.52L12.90 7.53L12.00 7.90L12.10 9.21L10.30 9.21L10.40 7.90L9.50 7.53L8.64 8.52L7.38 7.26L8.37 6.40L8.00 5.50L6.69 5.60L6.69 3.80L8.00 3.90L8.37 3.00L7.38 2.14L8.64 0.88L9.50 1.87L10.40 1.50L10.30 0.19L12.10 0.19L12.00 1.50L12.90 1.87L13.76 0.88L15.02 2.14L14.03 3.00L14.40 3.90zM9.30 4.70a1.90 1.90 0 1 0 3.80 0a1.90 1.90 0 1 0 -3.80 0z" fill="#8a6d2a" fill-rule="evenodd"/><rect x="10.50" y="4.00" width="1.40" height="1.40" fill="#8a6d2a" opacity=".8"/><circle cx="5" cy="8.8" r="5.6" fill="#fff" opacity=".9"/><path d="M10.00 7.81L10.00 9.79L8.59 9.69L8.17 10.71L9.24 11.63L7.83 13.04L6.91 11.97L5.89 12.39L5.99 13.80L4.01 13.80L4.11 12.39L3.09 11.97L2.17 13.04L0.76 11.63L1.83 10.71L1.41 9.69L-0.00 9.79L-0.00 7.81L1.41 7.91L1.83 6.89L0.76 5.97L2.17 4.56L3.09 5.63L4.11 5.21L4.01 3.80L5.99 3.80L5.89 5.21L6.91 5.63L7.83 4.56L9.24 5.97L8.17 6.89L8.59 7.91zM2.90 8.80a2.10 2.10 0 1 0 4.20 0a2.10 2.10 0 1 0 -4.20 0z" fill="#6b4a00" fill-rule="evenodd"/><rect x="4.20" y="8.00" width="1.60" height="1.60" fill="#6b4a00" opacity=".8"/><circle cx="11.5" cy="11.5" r="5.2" fill="#fff"/><circle cx="11.5" cy="11.5" r="4.1" fill="#fff" stroke="#ff1414" stroke-width="1.3"/><rect x="10.8" y="8.9" width="1.4" height="3.1" rx=".5" fill="#ff1414"/><circle cx="11.5" cy="13.5" r="0.8" fill="#ff1414"/></svg>
<div class="rp" style="top:519px">Требуют заполнения</div>
<div class="rp" style="top:535px">по операциям</div>
<div class="cb" style="top:560px"></div>
<svg style="left:1703px;top:560px" width="18" height="18" viewBox="0 0 18 18"><circle cx="8.5" cy="9.6" r="6.9" fill="#fff" stroke="#6b4a00" stroke-width="1.1"/><circle cx="8.5" cy="9.6" r="5.3" fill="none" stroke="#8a6d2a" stroke-width="1" stroke-dasharray="0.9 1.87" opacity=".75"/><path d="M5.2 5.4L8 9.6 10.6 6.4" fill="none" stroke="#6b4a00" stroke-width="1.5" stroke-linejoin="round"/><path d="M8 9.6L6 13" stroke="#6b4a00" stroke-width="1.3"/><circle cx="12.5" cy="5.4" r="5" fill="#fff"/><circle cx="12.5" cy="5.4" r="3.9" fill="#fff" stroke="#ff1414" stroke-width="1.3"/><rect x="11.8" y="2.9" width="1.4" height="3" rx=".5" fill="#ff1414"/><circle cx="12.5" cy="7.4" r="0.8" fill="#ff1414"/></svg>
<div class="rp" style="top:560px">Просрочены</div>
<div class="cb" style="top:589px"></div>
<svg style="left:1704px;top:590px" width="16" height="16" viewBox="0 0 16 16"><g fill="none" stroke="#6b4a00"><path d="M0.6 9.8V0.6H10" stroke-width="1.2"/><path d="M1.7 2.6V9.8" stroke-width="1" stroke-dasharray="1 1"/><path d="M2.6 1.7H10" stroke-width="1" stroke-dasharray="1 1"/><path d="M3.7 12.8V3.7H13" stroke-width="1.2"/><path d="M4.8 5.7V12.8" stroke-width="1" stroke-dasharray="1 1"/><path d="M5.7 4.8H13" stroke-width="1" stroke-dasharray="1 1"/></g><rect x="6.7" y="6.7" width="8.8" height="8.8" fill="#fde030" stroke="#6b4a00" stroke-width="1.1"/><rect x="10.3" y="8.3" width="1.6" height="3.9" rx=".4" fill="#4a5578"/><rect x="10.3" y="13.1" width="1.6" height="1.1" rx=".5" fill="#4a5578"/></svg>
<div class="rp" style="top:589px">На критическом пути</div>
<div class="cb" style="top:618px"></div>
<svg style="left:1703px;top:618px" width="18" height="18" viewBox="0 0 18 18"><rect x="1" y="3.8" width="8.8" height="9.6" fill="#ff2020"/><path d="M1.5 4.3H9.5M1.5 6.3H9.5M1.5 8.3H9.5M1.5 10.3H9.5M1.5 12.3H9.5" stroke="#fff" stroke-width="1" stroke-dasharray="1 1" opacity=".75"/><path d="M1.5 5.3H9.5M1.5 7.3H9.5M1.5 9.3H9.5M1.5 11.3H9.5" stroke="#fff" stroke-width="1" stroke-dasharray="1 1" stroke-dashoffset="1" opacity=".75"/><path d="M6.2 1.8H15.8" stroke="#6b4a00" stroke-width="1.3"/><path d="M6.5 3H11" stroke="#6b4a00" stroke-width="1" stroke-dasharray="1 1"/><rect x="11.2" y="2.4" width="4.6" height="3" fill="#6b4a00" opacity=".55"/><rect x="7.8" y="7.4" width="8.6" height="9" fill="#fdf3c8" stroke="#6b4a00" stroke-width="1.3"/><path d="M10.6 7.4V16.4M13.6 7.4V16.4" stroke="#6b4a00" stroke-width="1.1"/></svg>
<div class="rp" style="top:618px">Задерживают заказ</div>
<div class="t" style="left:1676px;top:1011px;color:#1a4fb4;text-decoration:underline">Свернуть &gt;&gt;</div>
<div id="bottom"></div>
</body></html>
